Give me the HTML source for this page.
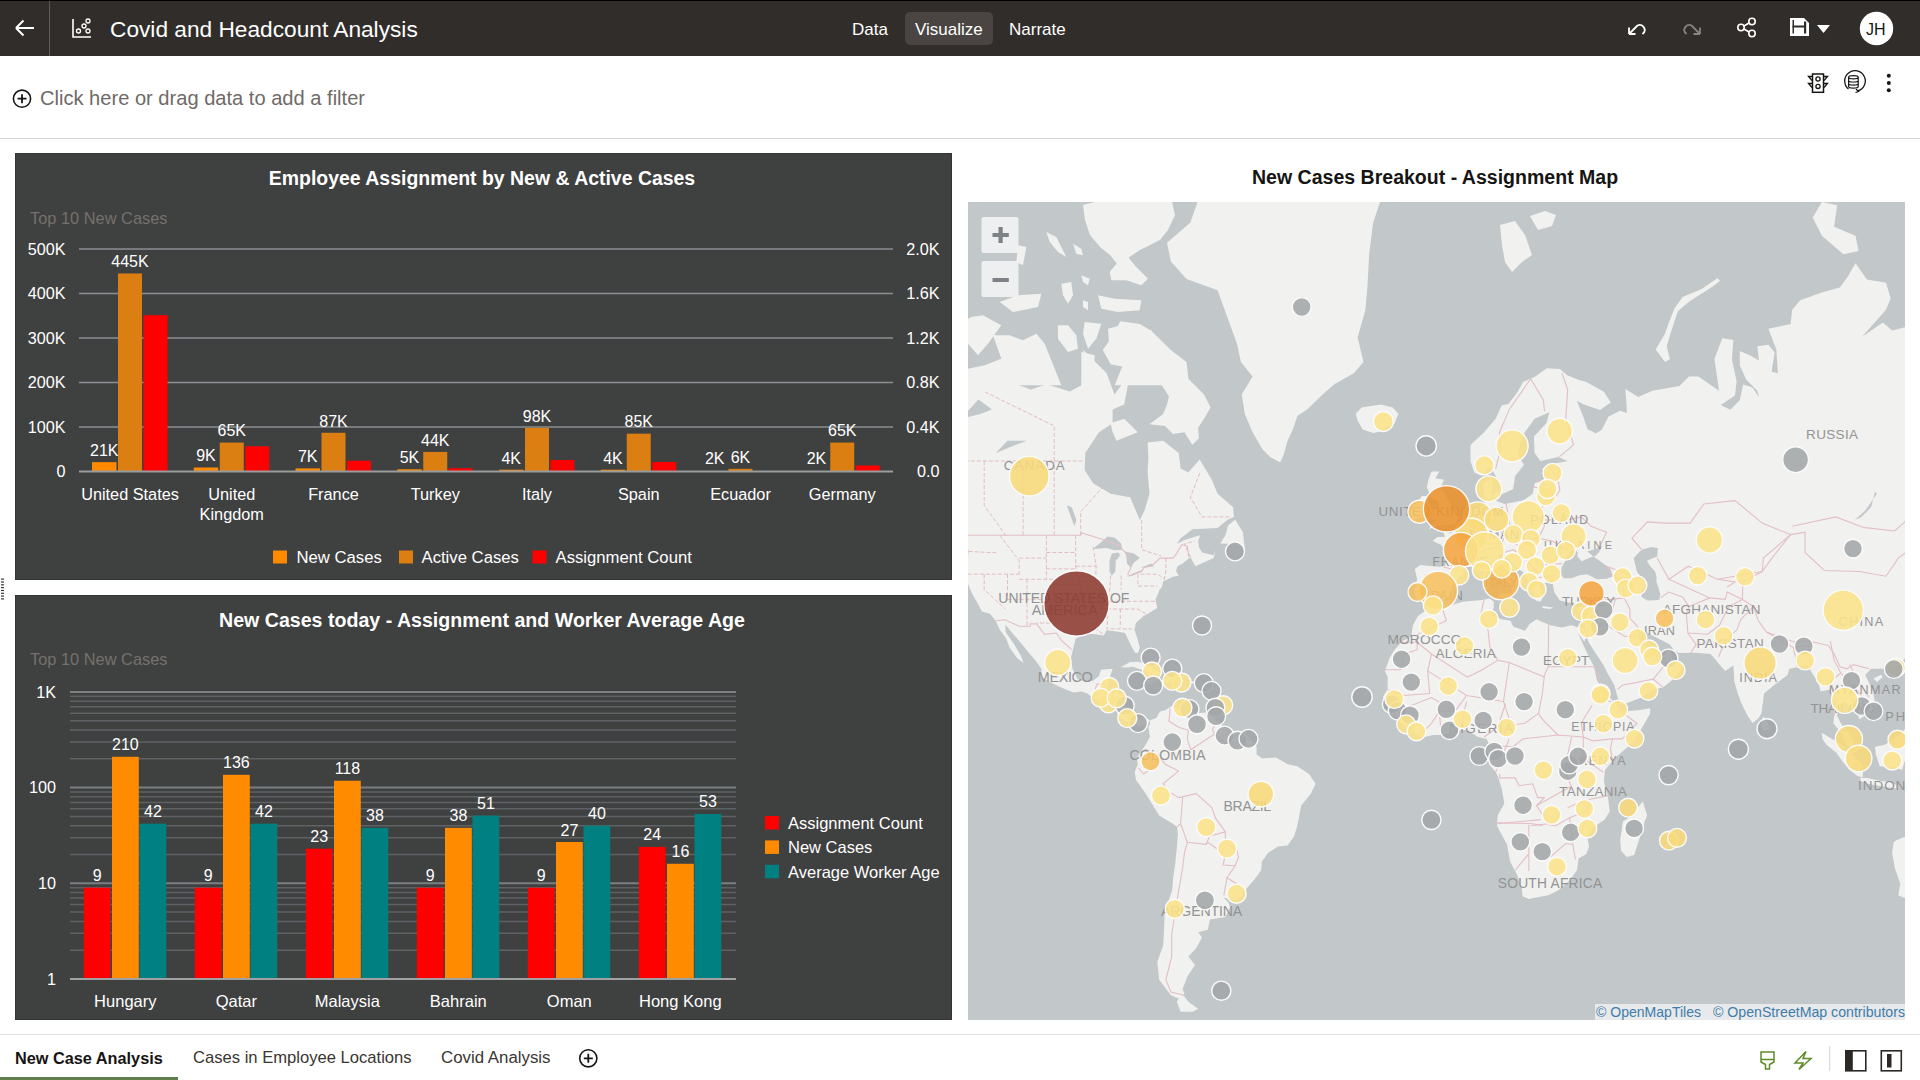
<!DOCTYPE html>
<html><head><meta charset="utf-8">
<style>
*{box-sizing:border-box;margin:0;padding:0}
html,body{width:1920px;height:1080px;overflow:hidden;background:#fff;font-family:"Liberation Sans",sans-serif}
.abs{position:absolute}
#hdr{position:absolute;left:0;top:0;width:1920px;height:56px;background:#312d2a;border-top:1px solid #000}
.ht{position:absolute;color:#fff;white-space:nowrap;line-height:1}
#filter{position:absolute;left:0;top:56px;width:1920px;height:83px;background:#fff;border-bottom:1px solid #d6d3d0}
.panel{position:absolute;background:#3f4040;box-shadow:inset 0 0 0 1px #333535}
.t{position:absolute;white-space:nowrap;line-height:1}
#tabs{position:absolute;left:0;top:1034px;width:1920px;height:46px;border-top:1px solid #e1dfdc;background:#fff}
</style></head>
<body>
<!-- HEADER -->
<div id="hdr">
  <svg class="abs" style="left:0;top:-1px" width="1920" height="56">
    <!-- back arrow -->
    <path d="M16 28 H34 M16 28 L23.5 20.5 M16 28 L23.5 35.5" stroke="#fff" stroke-width="2" fill="none"/>
    <line x1="49.5" y1="1" x2="49.5" y2="56" stroke="#5f5b58" stroke-width="1"/>
    <!-- scatter icon -->
    <path d="M73 19 V37 H91" stroke="#fff" stroke-width="1.6" fill="none"/>
    <circle cx="78.5" cy="31" r="2" stroke="#fff" stroke-width="1.3" fill="none"/>
    <circle cx="84" cy="26" r="2" stroke="#fff" stroke-width="1.3" fill="none"/>
    <circle cx="88" cy="21" r="2" stroke="#fff" stroke-width="1.3" fill="none"/>
    <circle cx="88" cy="31" r="2" stroke="#fff" stroke-width="1.3" fill="none"/>
    <!-- Visualize bg -->
    <rect x="905" y="12" width="88" height="33" rx="5" fill="#4a4542"/>
    <!-- undo -->
    <path d="M1629 34 L1637 26 M1629 34 V27.5 M1629 34 H1635.5 M1633 30 L1637.5 25.5 A5 5 0 0 1 1644 32.5 L1642.5 34" stroke="#fff" stroke-width="1.8" fill="none"/>
    <!-- redo -->
    <path d="M1700 34 L1692 26 M1700 34 V27.5 M1700 34 H1693.5 M1696 30 L1691.5 25.5 A5 5 0 0 0 1685 32.5 L1686.5 34" stroke="#8a8481" stroke-width="1.8" fill="none"/>
    <!-- share -->
    <circle cx="1741" cy="27.5" r="3.2" stroke="#fff" stroke-width="1.6" fill="none"/>
    <circle cx="1752" cy="21.5" r="3.2" stroke="#fff" stroke-width="1.6" fill="none"/>
    <circle cx="1752" cy="33.5" r="3.2" stroke="#fff" stroke-width="1.6" fill="none"/>
    <path d="M1744 26 L1749 23 M1744 29 L1749 32" stroke="#fff" stroke-width="1.6"/>
    <!-- save -->
    <path d="M1790 18 H1804 L1809 23 V36 H1790 Z" fill="#fff"/>
    <rect x="1792.5" y="20" width="1.5" height="13.5" fill="#312d2a"/>
    <rect x="1804" y="21.5" width="2.2" height="12" fill="#312d2a"/>
    <rect x="1792.5" y="25.5" width="13" height="2" fill="#312d2a"/>
    <path d="M1817 25 H1830 L1823.5 33 Z" fill="#fff"/>
    <!-- avatar -->
    <circle cx="1876.5" cy="28.5" r="16.7" fill="#fff"/>
  </svg>
  <div class="ht" style="left:110px;top:17px;font-size:22.7px">Covid and Headcount Analysis</div>
  <div class="ht" style="left:852px;top:20px;font-size:17px">Data</div>
  <div class="ht" style="left:915px;top:20px;font-size:17px">Visualize</div>
  <div class="ht" style="left:1009px;top:20px;font-size:17px">Narrate</div>
  <div class="ht" style="left:1866px;top:21px;font-size:16px;color:#161513">JH</div>
</div>

<!-- FILTER BAR -->
<div id="filter">
  <svg class="abs" style="left:0;top:0" width="1920" height="82">
    <circle cx="22" cy="42.7" r="8.6" stroke="#161513" stroke-width="1.6" fill="none"/>
    <path d="M17.5 42.7 H26.5 M22 38.2 V47.2" stroke="#161513" stroke-width="1.8"/>
    <!-- traffic light icon -->
    <rect x="1812.5" y="18" width="11" height="18.3" fill="none" stroke="#161513" stroke-width="1.5"/>
    <circle cx="1818" cy="23" r="2.1" fill="none" stroke="#161513" stroke-width="1.3"/>
    <circle cx="1818" cy="30.4" r="2.1" fill="none" stroke="#161513" stroke-width="1.3"/>
    <path d="M1812 20.5 H1808.5 L1812 24.5 M1812 27.5 H1808.5 L1812 31.5 M1824 20.5 H1827.5 L1824 24.5 M1824 27.5 H1827.5 L1824 31.5" fill="none" stroke="#161513" stroke-width="1.3"/>
    <!-- db refresh icon -->
    <path d="M1848.5 33 A10.3 10.3 0 1 1 1857.5 35" fill="none" stroke="#161513" stroke-width="1.3"/>
    <path d="M1856 33 L1858.5 35.5 L1855.5 36.5" fill="none" stroke="#161513" stroke-width="1.2"/>
    <ellipse cx="1853.4" cy="21.2" rx="4.8" ry="1.6" fill="none" stroke="#161513" stroke-width="1.2"/>
    <path d="M1848.6 21.2 V30.6 A4.8 1.6 0 0 0 1858.2 30.6 V21.2 M1848.6 24.4 A4.8 1.6 0 0 0 1858.2 24.4 M1848.6 27.6 A4.8 1.6 0 0 0 1858.2 27.6" fill="none" stroke="#161513" stroke-width="1.2"/>
    <!-- kebab -->
    <circle cx="1888.8" cy="19.7" r="2" fill="#161513"/>
    <circle cx="1888.8" cy="27" r="2" fill="#161513"/>
    <circle cx="1888.8" cy="34.3" r="2" fill="#161513"/>
  </svg>
  <div class="t" style="left:40px;top:32px;font-size:20.1px;color:#6f6a67">Click here or drag data to add a filter</div>
</div>

<!-- PANELS -->
<svg class="abs" style="left:0;top:0" width="6" height="1080">
  <g fill="#3a3836"><rect x="1" y="578.5" width="3" height="1.2"/><rect x="1" y="581.4" width="3" height="1.2"/><rect x="1" y="584.2" width="3" height="1.2"/><rect x="1" y="587" width="3" height="1.2"/><rect x="1" y="589.9" width="3" height="1.2"/><rect x="1" y="592.7" width="3" height="1.2"/><rect x="1" y="595.5" width="3" height="1.2"/><rect x="1" y="598.3" width="3" height="1.2"/></g>
</svg>
<div class="panel" id="p1" style="left:15px;top:153px;width:937px;height:427px"></div>
<svg class="abs" style="left:0;top:0;pointer-events:none" width="1920" height="1080" font-family="Liberation Sans, sans-serif">
<text x="482" y="185" text-anchor="middle" font-size="19.45" font-weight="700" fill="#fff">Employee Assignment by New &amp; Active Cases</text>
<text x="30" y="224" font-size="16.4" fill="#76716d">Top 10 New Cases</text>
<line x1="79" y1="427.0" x2="893" y2="427.0" stroke="#8b8f92" stroke-width="1.4"/>
<line x1="79" y1="382.5" x2="893" y2="382.5" stroke="#8b8f92" stroke-width="1.4"/>
<line x1="79" y1="338.0" x2="893" y2="338.0" stroke="#8b8f92" stroke-width="1.4"/>
<line x1="79" y1="293.5" x2="893" y2="293.5" stroke="#8b8f92" stroke-width="1.4"/>
<line x1="79" y1="249.0" x2="893" y2="249.0" stroke="#8b8f92" stroke-width="1.4"/>
<text x="65.5" y="477.1" text-anchor="end" font-size="16.2" fill="#fff">0</text>
<text x="939.5" y="477.1" text-anchor="end" font-size="16.2" fill="#fff">0.0</text>
<text x="65.5" y="432.6" text-anchor="end" font-size="16.2" fill="#fff">100K</text>
<text x="939.5" y="432.6" text-anchor="end" font-size="16.2" fill="#fff">0.4K</text>
<text x="65.5" y="388.1" text-anchor="end" font-size="16.2" fill="#fff">200K</text>
<text x="939.5" y="388.1" text-anchor="end" font-size="16.2" fill="#fff">0.8K</text>
<text x="65.5" y="343.6" text-anchor="end" font-size="16.2" fill="#fff">300K</text>
<text x="939.5" y="343.6" text-anchor="end" font-size="16.2" fill="#fff">1.2K</text>
<text x="65.5" y="299.1" text-anchor="end" font-size="16.2" fill="#fff">400K</text>
<text x="939.5" y="299.1" text-anchor="end" font-size="16.2" fill="#fff">1.6K</text>
<text x="65.5" y="254.6" text-anchor="end" font-size="16.2" fill="#fff">500K</text>
<text x="939.5" y="254.6" text-anchor="end" font-size="16.2" fill="#fff">2.0K</text>
<rect x="92.00" y="462.15" width="24.5" height="9.35" fill="#ff8a00"/>
<text x="104.25" y="455.95" text-anchor="middle" font-size="16" fill="#fff">21K</text>
<rect x="118.00" y="273.48" width="24" height="198.03" fill="#dc7f12"/>
<text x="130.00" y="267.28" text-anchor="middle" font-size="16" fill="#fff">445K</text>
<rect x="143.50" y="315.19" width="24" height="156.31" fill="#ff0000"/>
<text x="130.00" y="499.5" text-anchor="middle" font-size="16.3" fill="#fff">United States</text>
<rect x="193.75" y="467.50" width="24.5" height="4.00" fill="#ff8a00"/>
<text x="206.00" y="461.30" text-anchor="middle" font-size="16" fill="#fff">9K</text>
<rect x="219.75" y="442.57" width="24" height="28.93" fill="#dc7f12"/>
<text x="231.75" y="436.38" text-anchor="middle" font-size="16" fill="#fff">65K</text>
<rect x="245.25" y="446.25" width="24" height="25.25" fill="#ff0000"/>
<text x="231.75" y="499.5" text-anchor="middle" font-size="16.3" fill="#fff">United</text>
<text x="231.75" y="519.5" text-anchor="middle" font-size="16.3" fill="#fff">Kingdom</text>
<rect x="295.50" y="468.38" width="24.5" height="3.12" fill="#ff8a00"/>
<text x="307.75" y="462.19" text-anchor="middle" font-size="16" fill="#fff">7K</text>
<rect x="321.50" y="432.78" width="24" height="38.72" fill="#dc7f12"/>
<text x="333.50" y="426.58" text-anchor="middle" font-size="16" fill="#fff">87K</text>
<rect x="347.00" y="460.71" width="24" height="10.79" fill="#ff0000"/>
<text x="333.50" y="499.5" text-anchor="middle" font-size="16.3" fill="#fff">France</text>
<rect x="397.25" y="469.27" width="24.5" height="2.23" fill="#ff8a00"/>
<text x="409.50" y="463.07" text-anchor="middle" font-size="16" fill="#fff">5K</text>
<rect x="423.25" y="451.92" width="24" height="19.58" fill="#dc7f12"/>
<text x="435.25" y="445.72" text-anchor="middle" font-size="16" fill="#fff">44K</text>
<rect x="448.75" y="468.27" width="24" height="3.23" fill="#ff0000"/>
<text x="435.25" y="499.5" text-anchor="middle" font-size="16.3" fill="#fff">Turkey</text>
<rect x="499.00" y="469.72" width="24.5" height="1.78" fill="#ff8a00"/>
<text x="511.25" y="463.52" text-anchor="middle" font-size="16" fill="#fff">4K</text>
<rect x="525.00" y="427.89" width="24" height="43.61" fill="#dc7f12"/>
<text x="537.00" y="421.69" text-anchor="middle" font-size="16" fill="#fff">98K</text>
<rect x="550.50" y="460.04" width="24" height="11.46" fill="#ff0000"/>
<text x="537.00" y="499.5" text-anchor="middle" font-size="16.3" fill="#fff">Italy</text>
<rect x="600.75" y="469.72" width="24.5" height="1.78" fill="#ff8a00"/>
<text x="613.00" y="463.52" text-anchor="middle" font-size="16" fill="#fff">4K</text>
<rect x="626.75" y="433.68" width="24" height="37.83" fill="#dc7f12"/>
<text x="638.75" y="427.48" text-anchor="middle" font-size="16" fill="#fff">85K</text>
<rect x="652.25" y="462.04" width="24" height="9.46" fill="#ff0000"/>
<text x="638.75" y="499.5" text-anchor="middle" font-size="16.3" fill="#fff">Spain</text>
<text x="714.75" y="463.80" text-anchor="middle" font-size="16" fill="#fff">2K</text>
<rect x="728.50" y="468.83" width="24" height="2.67" fill="#dc7f12"/>
<text x="740.50" y="462.63" text-anchor="middle" font-size="16" fill="#fff">6K</text>
<text x="740.50" y="499.5" text-anchor="middle" font-size="16.3" fill="#fff">Ecuador</text>
<text x="816.50" y="463.80" text-anchor="middle" font-size="16" fill="#fff">2K</text>
<rect x="830.25" y="442.57" width="24" height="28.93" fill="#dc7f12"/>
<text x="842.25" y="436.38" text-anchor="middle" font-size="16" fill="#fff">65K</text>
<rect x="855.75" y="465.49" width="24" height="6.01" fill="#ff0000"/>
<text x="842.25" y="499.5" text-anchor="middle" font-size="16.3" fill="#fff">Germany</text>
<line x1="79" y1="471.5" x2="893" y2="471.5" stroke="#9a9b9c" stroke-width="2"/>
<rect x="273" y="550.5" width="14" height="13" fill="#ff8a00"/>
<text x="296.5" y="563" font-size="16.7" fill="#fff">New Cases</text>
<rect x="399" y="550.5" width="14" height="13" fill="#dc7f12"/>
<text x="421.5" y="563" font-size="16.7" fill="#fff">Active Cases</text>
<rect x="532.5" y="550.5" width="14" height="13" fill="#ff0000"/>
<text x="555.5" y="563" font-size="16.7" fill="#fff">Assignment Count</text>
</svg>
<div class="panel" id="p2" style="left:15px;top:595px;width:937px;height:425px"></div>
<svg class="abs" style="left:0;top:0;pointer-events:none" width="1920" height="1080" font-family="Liberation Sans, sans-serif">
<text x="482" y="626.8" text-anchor="middle" font-size="19.6" font-weight="700" fill="#fff">New Cases today - Assignment and Worker Average Age</text>
<text x="30" y="665" font-size="16.4" fill="#76716d">Top 10 New Cases</text>
<line x1="70" y1="950.19" x2="736" y2="950.19" stroke="#5e6265" stroke-width="1.5"/>
<line x1="70" y1="933.34" x2="736" y2="933.34" stroke="#5e6265" stroke-width="1.5"/>
<line x1="70" y1="921.38" x2="736" y2="921.38" stroke="#5e6265" stroke-width="1.5"/>
<line x1="70" y1="912.11" x2="736" y2="912.11" stroke="#5e6265" stroke-width="1.5"/>
<line x1="70" y1="904.53" x2="736" y2="904.53" stroke="#5e6265" stroke-width="1.5"/>
<line x1="70" y1="898.12" x2="736" y2="898.12" stroke="#5e6265" stroke-width="1.5"/>
<line x1="70" y1="892.57" x2="736" y2="892.57" stroke="#5e6265" stroke-width="1.5"/>
<line x1="70" y1="887.68" x2="736" y2="887.68" stroke="#5e6265" stroke-width="1.5"/>
<line x1="70" y1="883.30" x2="736" y2="883.30" stroke="#7b7f82" stroke-width="2"/>
<line x1="70" y1="854.49" x2="736" y2="854.49" stroke="#5e6265" stroke-width="1.5"/>
<line x1="70" y1="837.64" x2="736" y2="837.64" stroke="#5e6265" stroke-width="1.5"/>
<line x1="70" y1="825.68" x2="736" y2="825.68" stroke="#5e6265" stroke-width="1.5"/>
<line x1="70" y1="816.41" x2="736" y2="816.41" stroke="#5e6265" stroke-width="1.5"/>
<line x1="70" y1="808.83" x2="736" y2="808.83" stroke="#5e6265" stroke-width="1.5"/>
<line x1="70" y1="802.42" x2="736" y2="802.42" stroke="#5e6265" stroke-width="1.5"/>
<line x1="70" y1="796.87" x2="736" y2="796.87" stroke="#5e6265" stroke-width="1.5"/>
<line x1="70" y1="791.98" x2="736" y2="791.98" stroke="#5e6265" stroke-width="1.5"/>
<line x1="70" y1="787.60" x2="736" y2="787.60" stroke="#7b7f82" stroke-width="2"/>
<line x1="70" y1="758.79" x2="736" y2="758.79" stroke="#5e6265" stroke-width="1.5"/>
<line x1="70" y1="741.94" x2="736" y2="741.94" stroke="#5e6265" stroke-width="1.5"/>
<line x1="70" y1="729.98" x2="736" y2="729.98" stroke="#5e6265" stroke-width="1.5"/>
<line x1="70" y1="720.71" x2="736" y2="720.71" stroke="#5e6265" stroke-width="1.5"/>
<line x1="70" y1="713.13" x2="736" y2="713.13" stroke="#5e6265" stroke-width="1.5"/>
<line x1="70" y1="706.72" x2="736" y2="706.72" stroke="#5e6265" stroke-width="1.5"/>
<line x1="70" y1="701.17" x2="736" y2="701.17" stroke="#5e6265" stroke-width="1.5"/>
<line x1="70" y1="696.28" x2="736" y2="696.28" stroke="#5e6265" stroke-width="1.5"/>
<line x1="70" y1="691.90" x2="736" y2="691.90" stroke="#7b7f82" stroke-width="2"/>
<text x="56" y="984.60" text-anchor="end" font-size="16.2" fill="#fff">1</text>
<text x="56" y="888.90" text-anchor="end" font-size="16.2" fill="#fff">10</text>
<text x="56" y="793.20" text-anchor="end" font-size="16.2" fill="#fff">100</text>
<text x="56" y="697.50" text-anchor="end" font-size="16.2" fill="#fff">1K</text>
<rect x="83.80" y="887.68" width="26.8" height="91.32" fill="#ff0000"/>
<text x="97.20" y="881.18" text-anchor="middle" font-size="16" fill="#fff">9</text>
<rect x="112.00" y="756.76" width="26.8" height="222.24" fill="#ff8c00"/>
<text x="125.40" y="750.26" text-anchor="middle" font-size="16" fill="#fff">210</text>
<rect x="139.50" y="823.66" width="26.8" height="155.34" fill="#008080"/>
<text x="152.90" y="817.16" text-anchor="middle" font-size="16" fill="#fff">42</text>
<text x="125.30" y="1006.5" text-anchor="middle" font-size="16.5" fill="#fff">Hungary</text>
<rect x="194.80" y="887.68" width="26.8" height="91.32" fill="#ff0000"/>
<text x="208.20" y="881.18" text-anchor="middle" font-size="16" fill="#fff">9</text>
<rect x="223.00" y="774.82" width="26.8" height="204.18" fill="#ff8c00"/>
<text x="236.40" y="768.32" text-anchor="middle" font-size="16" fill="#fff">136</text>
<rect x="250.50" y="823.66" width="26.8" height="155.34" fill="#008080"/>
<text x="263.90" y="817.16" text-anchor="middle" font-size="16" fill="#fff">42</text>
<text x="236.30" y="1006.5" text-anchor="middle" font-size="16.5" fill="#fff">Qatar</text>
<rect x="305.80" y="848.68" width="26.8" height="130.32" fill="#ff0000"/>
<text x="319.20" y="842.18" text-anchor="middle" font-size="16" fill="#fff">23</text>
<rect x="334.00" y="780.72" width="26.8" height="198.28" fill="#ff8c00"/>
<text x="347.40" y="774.22" text-anchor="middle" font-size="16" fill="#fff">118</text>
<rect x="361.50" y="827.81" width="26.8" height="151.19" fill="#008080"/>
<text x="374.90" y="821.31" text-anchor="middle" font-size="16" fill="#fff">38</text>
<text x="347.30" y="1006.5" text-anchor="middle" font-size="16.5" fill="#fff">Malaysia</text>
<rect x="416.80" y="887.68" width="26.8" height="91.32" fill="#ff0000"/>
<text x="430.20" y="881.18" text-anchor="middle" font-size="16" fill="#fff">9</text>
<rect x="445.00" y="827.81" width="26.8" height="151.19" fill="#ff8c00"/>
<text x="458.40" y="821.31" text-anchor="middle" font-size="16" fill="#fff">38</text>
<rect x="472.50" y="815.59" width="26.8" height="163.41" fill="#008080"/>
<text x="485.90" y="809.09" text-anchor="middle" font-size="16" fill="#fff">51</text>
<text x="458.30" y="1006.5" text-anchor="middle" font-size="16.5" fill="#fff">Bahrain</text>
<rect x="527.80" y="887.68" width="26.8" height="91.32" fill="#ff0000"/>
<text x="541.20" y="881.18" text-anchor="middle" font-size="16" fill="#fff">9</text>
<rect x="556.00" y="842.02" width="26.8" height="136.98" fill="#ff8c00"/>
<text x="569.40" y="835.52" text-anchor="middle" font-size="16" fill="#fff">27</text>
<rect x="583.50" y="825.68" width="26.8" height="153.32" fill="#008080"/>
<text x="596.90" y="819.18" text-anchor="middle" font-size="16" fill="#fff">40</text>
<text x="569.30" y="1006.5" text-anchor="middle" font-size="16.5" fill="#fff">Oman</text>
<rect x="638.80" y="846.91" width="26.8" height="132.09" fill="#ff0000"/>
<text x="652.20" y="840.41" text-anchor="middle" font-size="16" fill="#fff">24</text>
<rect x="667.00" y="863.77" width="26.8" height="115.23" fill="#ff8c00"/>
<text x="680.40" y="857.27" text-anchor="middle" font-size="16" fill="#fff">16</text>
<rect x="694.50" y="813.99" width="26.8" height="165.01" fill="#008080"/>
<text x="707.90" y="807.49" text-anchor="middle" font-size="16" fill="#fff">53</text>
<text x="680.30" y="1006.5" text-anchor="middle" font-size="16.5" fill="#fff">Hong Kong</text>
<line x1="70" y1="979.0" x2="736" y2="979.0" stroke="#a0a1a2" stroke-width="2.2"/>
<rect x="765" y="816" width="14" height="13.5" fill="#ff0000"/>
<text x="788" y="829" font-size="16.5" fill="#fff">Assignment Count</text>
<rect x="765" y="840.4" width="14" height="13.5" fill="#ff8c00"/>
<text x="788" y="853.4" font-size="16.5" fill="#fff">New Cases</text>
<rect x="765" y="864.8" width="14" height="13.5" fill="#008080"/>
<text x="788" y="877.8" font-size="16.5" fill="#fff">Average Worker Age</text>
</svg>
<svg class="abs" style="left:0;top:0" width="1920" height="1080" font-family="Liberation Sans, sans-serif">
<defs><clipPath id="mclip"><rect x="968" y="202" width="937" height="818"/></clipPath></defs>
<g clip-path="url(#mclip)">
<rect x="968" y="202" width="937" height="818" fill="#c2c7ca"/>
<path d="M828.6 367.7 L902.5 373.3 L925.9 371.1 L949.2 367.7 L968.6 373.3 L984.2 367.7 L1007.5 381.0 L1030.9 389.4 L1046.4 384.2 L1069.8 391.5 L1081.5 385.2 L1083.4 350.0 L1106.7 373.3 L1114.5 394.6 L1130.1 373.3 L1124.2 404.5 L1112.6 409.4 L1112.6 423.3 L1099.0 432.2 L1085.3 453.1 L1084.6 470.1 L1093.1 483.3 L1110.6 493.8 L1130.1 497.2 L1139.8 520.0 L1144.5 510.5 L1149.5 493.8 L1147.6 472.4 L1148.4 457.1 L1147.6 442.4 L1163.1 440.7 L1178.7 453.1 L1180.6 468.6 L1188.4 472.4 L1199.7 459.4 L1211.8 479.7 L1217.6 493.8 L1233.2 507.2 L1233.9 516.9 L1227.3 520.0 L1217.6 528.0 L1192.3 529.2 L1186.5 534.0 L1180.6 538.2 L1176.8 544.0 L1184.5 539.9 L1200.1 535.2 L1198.2 541.1 L1198.9 546.9 L1202.0 552.5 L1213.7 555.3 L1215.7 549.7 L1213.7 558.1 L1195.4 566.2 L1192.3 560.8 L1190.4 557.0 L1182.6 563.5 L1177.5 566.2 L1176.0 571.0 L1178.7 575.7 L1172.9 576.8 L1163.1 581.4 L1162.0 587.0 L1159.2 590.0 L1158.9 592.0 L1155.4 599.4 L1157.3 608.0 L1151.5 611.4 L1143.7 616.1 L1135.9 623.0 L1134.4 629.8 L1137.5 638.8 L1139.8 647.5 L1138.2 653.1 L1135.1 652.7 L1132.0 647.5 L1128.9 641.0 L1125.0 633.0 L1119.6 632.1 L1106.7 630.3 L1103.6 635.6 L1095.1 634.3 L1086.1 633.4 L1075.6 638.8 L1072.9 649.7 L1070.9 658.3 L1072.5 668.8 L1077.6 679.2 L1083.4 681.3 L1093.1 680.8 L1099.0 675.9 L1100.9 669.7 L1112.6 668.8 L1110.6 675.1 L1108.7 681.3 L1106.7 691.4 L1116.5 692.2 L1127.0 695.5 L1125.8 705.5 L1125.4 711.4 L1130.9 717.4 L1139.8 718.2 L1145.6 717.4 L1149.9 720.5 L1146.8 725.2 L1137.9 726.0 L1132.0 722.5 L1126.2 721.3 L1117.6 715.8 L1117.2 711.4 L1110.6 705.5 L1106.7 702.3 L1095.1 699.5 L1087.3 693.5 L1081.5 691.4 L1073.7 692.6 L1065.9 689.4 L1056.2 685.3 L1048.4 681.3 L1041.4 677.1 L1041.4 668.8 L1035.5 660.4 L1028.2 651.9 L1021.2 643.2 L1013.4 634.3 L1005.2 624.4 L1005.6 632.1 L1013.4 643.2 L1021.2 656.2 L1023.5 662.9 L1017.3 658.3 L1009.5 647.5 L1006.4 638.8 L999.8 629.8 L995.5 620.7 L990.0 613.7 L981.9 611.4 L976.8 601.8 L972.5 594.5 L967.1 581.9 L966.7 568.9 L968.6 551.4 L965.9 538.8 L955.0 529.2 L951.1 516.9 L943.4 500.6 L922.0 476.1 L906.4 464.8 L828.6 461.0Z" fill="#f1f1ef" />
<path d="M1139.8 324.1 L1151.5 330.9 L1170.9 350.0 L1186.5 362.0 L1188.4 378.8 L1204.0 394.6 L1210.6 407.4 L1204.0 418.7 L1198.2 427.8 L1198.9 438.2 L1192.3 444.9 L1184.5 432.2 L1172.9 433.9 L1165.1 426.0 L1149.5 424.2 L1163.1 414.1 L1167.0 404.5 L1169.0 396.6 L1161.2 384.2 L1151.5 371.1 L1143.7 375.5 L1128.1 367.7 L1110.6 364.3 L1102.8 350.0 L1112.6 336.1 L1120.3 321.3Z" fill="#f1f1ef" />
<path d="M1116.5 440.7 L1137.9 432.2 L1124.2 418.7 L1110.6 423.3 L1112.6 432.2Z" fill="#f1f1ef" />
<path d="M1280.2 462.5 L1270.1 457.1 L1262.3 449.0 L1252.6 432.2 L1244.8 414.1 L1241.7 394.6 L1252.6 376.6 L1240.9 362.0 L1237.0 343.8 L1227.3 317.2 L1217.6 290.2 L1186.5 278.9 L1170.9 261.6 L1167.0 242.8 L1190.4 222.4 L1198.2 200.0 L1217.6 161.6 L1295.4 131.7 L1365.4 161.6 L1384.9 187.9 L1373.2 222.4 L1369.3 252.4 L1367.4 287.0 L1365.4 310.0 L1357.6 337.4 L1363.5 362.0 L1353.8 373.3 L1334.3 384.2 L1322.6 394.6 L1307.1 409.4 L1297.3 416.0 L1293.5 427.8 L1287.6 440.7 L1283.7 454.7Z" fill="#f1f1ef" />
<path d="M1373.2 433.0 L1362.7 429.5 L1357.6 420.6 L1355.7 414.1 L1361.5 407.4 L1381.0 404.5 L1392.7 407.4 L1398.5 414.1 L1394.6 423.3 L1381.0 431.3Z" fill="#f1f1ef" />
<path d="M1235.1 519.4 L1242.9 532.2 L1244.8 548.6 L1235.1 544.0 L1220.3 543.4 L1225.4 535.2 L1228.1 525.6Z" fill="#f1f1ef" />
<path d="M1120.7 667.2 L1130.1 662.1 L1137.9 661.7 L1147.6 664.6 L1155.4 670.1 L1162.4 673.8 L1157.3 675.5 L1148.7 675.5 L1145.6 670.9 L1137.9 668.4 L1132.8 666.7 L1126.2 667.6Z" fill="#f1f1ef" />
<path d="M1167.8 675.5 L1178.7 676.3 L1184.9 681.3 L1174.8 682.5 L1161.6 683.3 L1162.0 680.8Z" fill="#f1f1ef" />
<path d="M1146.4 681.3 L1154.2 682.5 L1151.5 684.5 L1146.4 683.3Z" fill="#f1f1ef" />
<path d="M1189.6 681.3 L1195.8 681.7 L1195.0 683.5 L1189.6 683.3Z" fill="#f1f1ef" />
<path d="M970.6 539.4 L964.8 529.2 L951.5 524.4 L953.1 526.8 L960.9 535.2Z" fill="#f1f1ef" />
<path d="M1149.9 720.5 L1156.5 717.8 L1160.0 711.4 L1165.1 710.3 L1172.1 705.9 L1177.9 708.3 L1185.7 712.2 L1194.3 713.4 L1205.9 712.6 L1210.6 715.4 L1217.6 721.3 L1223.4 727.2 L1237.0 731.9 L1244.8 733.1 L1250.7 738.9 L1256.5 746.7 L1256.5 754.5 L1262.3 758.4 L1276.0 757.6 L1287.6 764.2 L1297.3 766.2 L1309.0 774.0 L1315.6 783.8 L1311.0 793.6 L1301.2 805.5 L1299.3 815.5 L1297.3 825.7 L1294.2 836.0 L1287.6 845.6 L1277.9 846.5 L1268.2 852.8 L1261.9 861.5 L1261.2 870.2 L1254.6 879.2 L1246.8 888.3 L1240.9 897.6 L1233.2 900.0 L1223.4 897.6 L1228.5 902.4 L1230.0 907.2 L1225.4 917.0 L1209.8 919.5 L1207.9 929.7 L1198.2 932.2 L1202.0 937.5 L1196.2 948.2 L1188.4 956.5 L1195.0 965.0 L1187.3 976.8 L1182.6 989.0 L1184.5 994.0 L1178.7 998.5 L1170.9 995.3 L1159.2 979.8 L1157.3 962.1 L1163.1 945.5 L1163.9 932.2 L1164.7 912.1 L1172.1 890.6 L1173.3 876.9 L1175.2 863.6 L1176.8 848.6 L1177.9 833.9 L1177.1 826.9 L1172.9 823.7 L1159.2 815.5 L1154.2 807.5 L1145.6 793.6 L1135.9 779.8 L1134.7 772.0 L1137.9 764.2 L1136.7 758.4 L1141.7 750.6 L1145.6 744.8 L1149.9 737.0 L1148.4 727.2 L1150.3 723.3Z" fill="#f1f1ef" />
<path d="M1180.6 995.3 L1176.8 1001.8 L1180.6 1011.8 L1192.3 1011.8 L1198.2 1009.1 L1188.4 1001.8 L1184.1 995.9Z" fill="#f1f1ef" />
<path d="M1428.4 605.2 L1443.2 608.0 L1451.0 605.2 L1462.7 601.8 L1482.1 599.9 L1489.9 598.4 L1493.8 601.8 L1493.8 608.0 L1490.7 612.3 L1493.8 616.1 L1501.6 619.3 L1510.5 620.7 L1513.2 626.6 L1524.9 630.7 L1529.6 623.9 L1536.6 619.3 L1542.4 622.1 L1550.2 625.3 L1561.9 627.6 L1571.6 625.3 L1576.6 627.1 L1583.3 627.6 L1586.8 634.3 L1584.4 641.8 L1577.8 632.5 L1582.5 643.2 L1589.5 658.3 L1594.2 666.7 L1596.5 679.2 L1604.3 693.1 L1616.3 703.5 L1619.0 709.5 L1624.1 711.4 L1637.7 710.3 L1650.2 708.3 L1650.2 713.4 L1644.7 723.3 L1637.7 735.0 L1628.0 746.7 L1614.4 758.4 L1605.0 770.1 L1603.9 781.8 L1607.8 795.6 L1609.7 811.5 L1604.7 819.6 L1593.0 827.7 L1587.2 836.0 L1589.1 846.5 L1586.4 854.1 L1578.6 858.4 L1577.0 870.2 L1568.5 881.4 L1558.0 890.6 L1548.2 895.3 L1528.8 899.1 L1522.6 896.2 L1521.8 888.3 L1517.1 874.7 L1510.1 861.5 L1507.0 844.4 L1496.9 825.7 L1497.7 815.5 L1504.3 803.5 L1502.0 789.7 L1498.5 777.9 L1495.7 772.0 L1489.1 764.2 L1487.2 754.5 L1489.1 744.8 L1486.8 738.9 L1478.2 737.0 L1466.6 729.9 L1456.8 730.3 L1443.2 735.0 L1433.5 735.0 L1421.8 737.4 L1408.2 729.2 L1399.7 721.3 L1393.4 713.4 L1385.6 705.5 L1382.9 696.7 L1387.6 689.4 L1387.6 677.1 L1384.9 670.9 L1389.5 658.3 L1394.6 649.7 L1402.4 641.0 L1411.3 636.5 L1412.9 625.3 L1417.9 616.1 L1424.5 611.4Z" fill="#f1f1ef" />
<path d="M1642.8 801.5 L1647.1 815.5 L1644.7 821.6 L1639.7 838.1 L1634.2 855.0 L1626.8 857.1 L1621.0 850.7 L1620.2 840.2 L1622.9 821.6 L1631.9 815.5 L1637.7 807.5Z" fill="#f1f1ef" />
<path d="M1429.2 604.2 L1424.2 599.4 L1416.4 599.9 L1414.0 591.0 L1417.2 579.3 L1414.8 568.9 L1420.3 565.1 L1437.4 566.7 L1445.2 566.2 L1446.3 560.8 L1444.0 549.7 L1441.3 545.1 L1432.7 541.1 L1437.4 537.0 L1444.8 537.0 L1443.6 531.0 L1450.2 533.4 L1456.8 529.2 L1460.7 522.5 L1467.3 516.9 L1472.4 508.5 L1480.2 507.2 L1484.8 504.6 L1484.5 498.6 L1483.3 483.3 L1491.8 478.3 L1493.0 486.9 L1491.1 493.8 L1493.8 499.9 L1504.7 503.9 L1523.0 500.6 L1532.7 493.8 L1534.6 483.3 L1545.5 479.7 L1542.4 468.6 L1548.2 464.8 L1567.7 461.0 L1558.0 457.1 L1540.5 461.0 L1534.6 453.1 L1533.9 436.5 L1546.3 423.3 L1549.4 412.2 L1534.6 418.7 L1524.9 432.2 L1518.3 449.0 L1519.1 457.1 L1524.1 464.8 L1515.2 476.1 L1513.2 489.0 L1501.6 494.5 L1500.4 486.9 L1495.7 476.1 L1489.9 466.4 L1482.1 476.1 L1474.3 472.4 L1470.5 461.0 L1470.5 444.9 L1484.1 432.2 L1495.7 418.7 L1501.6 405.5 L1508.3 404.0 L1516.7 393.3 L1523.3 381.7 L1535.0 376.7 L1546.7 368.3 L1560.0 369.0 L1566.7 375.0 L1579.0 380.0 L1585.8 381.7 L1604.0 391.7 L1610.8 402.5 L1600.0 410.0 L1583.3 404.2 L1576.7 400.8 L1583.3 416.7 L1587.5 429.2 L1595.8 433.3 L1601.7 430.0 L1608.3 416.7 L1620.0 410.8 L1627.0 413.0 L1625.4 389.0 L1638.1 397.0 L1652.4 390.7 L1679.4 386.0 L1689.0 376.4 L1698.5 376.4 L1719.1 390.7 L1714.4 359.0 L1722.3 338.3 L1733.4 339.9 L1731.9 359.0 L1736.6 381.2 L1735.0 395.5 L1720.7 405.0 L1730.3 409.8 L1739.8 400.3 L1743.0 384.4 L1752.5 387.6 L1758.9 397.0 L1757.3 390.7 L1746.1 379.6 L1739.8 365.3 L1739.8 351.0 L1750.9 355.8 L1758.9 360.5 L1757.3 346.3 L1768.4 344.7 L1774.7 352.6 L1771.6 371.7 L1777.9 373.3 L1776.3 349.4 L1768.4 328.8 L1790.6 324.0 L1792.2 309.7 L1800.2 300.2 L1822.4 292.2 L1839.9 287.5 L1847.8 276.4 L1855.5 263.3 L1866.9 279.5 L1886.0 282.7 L1890.7 298.6 L1886.0 309.7 L1862.1 336.7 L1882.8 322.4 L1892.3 330.4 L1905.0 327.2 L1960.0 320.0 L1956.7 330.9 L1956.7 584.5 L1925.6 632.1 L1898.3 666.7 L1882.8 668.8 L1871.1 668.8 L1865.3 675.1 L1873.1 691.4 L1875.8 707.5 L1869.2 713.4 L1859.5 719.3 L1857.5 714.2 L1849.7 705.5 L1841.9 701.5 L1840.0 705.5 L1836.9 715.4 L1841.9 725.2 L1848.6 731.1 L1853.2 740.9 L1856.3 749.1 L1853.6 749.4 L1845.8 744.8 L1841.2 733.1 L1833.4 723.3 L1834.2 715.4 L1834.6 705.5 L1830.3 689.4 L1820.5 691.4 L1818.6 683.3 L1810.8 670.9 L1806.9 664.6 L1801.1 666.7 L1789.4 668.8 L1787.5 675.1 L1773.9 685.3 L1764.1 693.5 L1763.0 701.5 L1761.4 713.4 L1758.3 718.6 L1752.5 722.9 L1747.4 715.4 L1741.6 703.5 L1737.7 693.5 L1734.2 681.3 L1733.8 670.9 L1733.4 665.5 L1725.2 670.9 L1719.4 664.6 L1716.3 660.4 L1710.5 654.0 L1696.1 652.7 L1678.6 653.1 L1673.5 649.7 L1670.0 644.5 L1645.5 632.1 L1639.7 632.1 L1637.7 636.5 L1644.7 645.4 L1651.3 649.7 L1651.3 656.2 L1661.8 657.4 L1666.9 651.9 L1670.0 648.0 L1672.0 658.3 L1683.6 664.6 L1678.6 673.0 L1670.8 681.3 L1663.0 687.4 L1653.3 689.4 L1641.6 697.5 L1626.0 703.5 L1620.2 704.7 L1617.1 695.5 L1614.4 685.3 L1608.5 675.1 L1603.1 664.6 L1596.1 654.0 L1587.9 641.0 L1587.2 634.3 L1584.0 626.2 L1587.5 618.4 L1590.7 609.0 L1591.0 600.4 L1581.3 603.3 L1569.6 602.8 L1559.9 600.4 L1554.1 592.0 L1552.9 584.5 L1552.1 579.9 L1544.4 583.4 L1539.7 581.9 L1539.7 587.0 L1544.0 594.5 L1540.5 601.8 L1535.8 600.4 L1533.5 593.0 L1529.2 587.0 L1526.9 579.3 L1523.0 572.1 L1514.4 566.2 L1506.6 556.4 L1504.3 554.2 L1498.8 555.3 L1499.6 563.5 L1506.2 571.5 L1513.2 576.8 L1523.0 581.9 L1517.5 582.9 L1517.5 589.5 L1513.6 594.5 L1511.7 593.5 L1511.7 584.5 L1503.5 578.3 L1494.6 571.5 L1490.7 563.5 L1485.2 561.3 L1480.2 565.1 L1476.3 568.3 L1470.5 566.7 L1464.6 567.3 L1463.4 572.6 L1458.0 578.3 L1453.3 581.9 L1451.8 590.5 L1448.3 596.4 L1443.2 600.4 L1433.9 600.8Z" fill="#f1f1ef" />
<path d="M1428.8 529.2 L1437.4 525.6 L1445.2 525.0 L1454.9 524.4 L1456.4 520.6 L1457.6 516.9 L1457.6 511.1 L1451.8 507.2 L1448.7 500.6 L1443.2 491.8 L1439.3 490.4 L1444.0 479.7 L1435.4 478.3 L1439.3 471.6 L1431.5 471.6 L1428.4 479.7 L1426.9 486.9 L1429.6 493.8 L1431.5 498.6 L1437.4 500.6 L1439.3 508.5 L1433.1 509.2 L1431.2 516.9 L1431.5 519.4 L1438.2 520.0 L1433.5 521.9Z" fill="#f1f1ef" />
<path d="M1412.9 520.0 L1410.5 515.6 L1411.7 507.2 L1417.9 502.0 L1421.8 495.9 L1426.9 495.9 L1427.7 503.9 L1426.5 515.6 L1419.1 518.1Z" fill="#f1f1ef" />
<path d="M1500.0 225.0 L1515.0 221.0 L1525.0 235.0 L1532.0 255.0 L1522.0 262.0 L1512.0 272.0 L1505.0 262.0 L1502.0 245.0Z" fill="#f1f1ef" />
<path d="M1530.0 216.0 L1545.0 211.0 L1556.0 215.0 L1552.0 226.0 L1538.0 230.0Z" fill="#f1f1ef" />
<path d="M1812.7 217.5 L1821.9 202.0 L1837.2 205.3 L1834.1 226.7 L1855.5 235.8 L1858.6 251.1 L1843.3 254.2 L1821.9 235.8Z" fill="#f1f1ef" />
<path d="M1717.6 278.0 L1701.7 289.0 L1682.6 297.0 L1674.7 308.0 L1668.3 324.0 L1665.1 333.5 L1655.6 349.4 L1665.1 362.0 L1669.9 359.0 L1666.7 346.3 L1671.5 330.4 L1677.8 311.3 L1689.0 301.8 L1711.2 287.5 L1720.0 281.0Z" fill="#f1f1ef" />
<path d="M1763.0 716.2 L1768.0 723.3 L1769.2 729.2 L1764.1 731.1 L1761.4 727.2Z" fill="#f1f1ef" />
<path d="M1821.7 732.7 L1832.2 738.9 L1841.9 744.8 L1849.7 750.6 L1856.7 758.4 L1863.3 766.2 L1862.6 777.5 L1857.5 775.9 L1849.7 770.1 L1843.1 762.3 L1836.1 752.6 L1826.4 744.8 L1822.5 738.9Z" fill="#f1f1ef" />
<path d="M1860.2 777.9 L1867.2 777.9 L1880.8 781.0 L1888.6 781.8 L1896.4 784.9 L1896.4 788.5 L1882.8 786.5 L1867.2 783.8 L1860.6 781.0Z" fill="#f1f1ef" />
<path d="M1906.1 727.2 L1900.3 735.0 L1884.7 744.8 L1875.0 746.7 L1875.8 754.5 L1879.7 766.2 L1896.4 768.1 L1902.2 770.1 L1904.2 762.3 L1913.9 750.6 L1910.0 738.9 L1912.0 729.2Z" fill="#f1f1ef" />
<path d="M1893.7 842.3 L1892.1 852.8 L1893.7 861.5 L1894.8 868.0 L1900.3 883.7 L1898.3 895.3 L1909.2 900.0 L1937.2 895.3 L1937.2 809.5 L1912.0 833.9 L1896.4 840.2Z" fill="#f1f1ef" />
<path d="M1880.8 674.7 L1882.8 677.1 L1877.0 682.1 L1873.5 678.4Z" fill="#f1f1ef" />
<path d="M1499.2 593.0 L1511.7 593.5 L1510.5 599.4 L1509.3 600.8 L1499.6 596.9Z" fill="#f1f1ef" />
<path d="M1486.8 578.3 L1489.1 579.9 L1488.3 589.0 L1484.1 590.0 L1482.9 581.4Z" fill="#f1f1ef" />
<path d="M1487.6 568.9 L1486.8 577.3 L1484.5 574.7 L1484.5 569.9Z" fill="#f1f1ef" />
<path d="M1542.4 606.1 L1553.3 607.6 L1550.2 609.0 L1542.4 608.0Z" fill="#f1f1ef" />
<path d="M1585.6 606.1 L1579.4 610.9 L1576.6 609.5 L1579.4 607.6Z" fill="#f1f1ef" />
<path d="M1499.6 490.4 L1498.5 497.2 L1493.8 499.3 L1493.0 493.8Z" fill="#f1f1ef" />
<path d="M1083.0 205.0 L1095.0 202.0 L1172.0 202.0 L1175.0 215.0 L1168.0 230.0 L1160.0 240.0 L1150.0 245.0 L1140.0 250.0 L1128.0 258.0 L1118.0 265.0 L1110.0 255.0 L1100.0 247.0 L1090.0 235.0 L1085.0 220.0Z" fill="#f1f1ef"/>
<path d="M1109.7 272.0 L1118.0 262.0 L1128.0 257.0 L1136.3 267.0 L1148.0 278.7 L1141.3 285.3 L1126.3 280.3 L1111.3 280.3Z" fill="#f1f1ef"/>
<path d="M1098.0 295.3 L1114.7 298.7 L1141.3 300.3 L1139.7 310.3 L1118.0 312.0 L1101.3 308.7Z" fill="#f1f1ef"/>
<path d="M1046.3 232.0 L1056.3 237.0 L1066.3 257.0 L1058.0 252.0 L1049.7 242.0Z" fill="#f1f1ef"/>
<path d="M1073.0 243.7 L1081.3 248.7 L1083.0 255.3 L1076.3 253.7Z" fill="#f1f1ef"/>
<path d="M1081.3 275.3 L1089.7 278.7 L1088.0 285.3 L1083.0 282.0Z" fill="#f1f1ef"/>
<path d="M1061.3 283.7 L1071.3 282.0 L1073.0 295.3 L1068.0 303.7 L1063.0 295.3Z" fill="#f1f1ef"/>
<path d="M1083.0 300.3 L1088.0 302.0 L1088.0 310.3 L1083.0 307.0Z" fill="#f1f1ef"/>
<path d="M1018.0 245.3 L1026.3 247.0 L1023.0 265.3 L1016.3 262.0Z" fill="#f1f1ef"/>
<path d="M999.7 302.0 L1018.0 295.3 L1041.3 293.7 L1038.0 307.0 L1013.0 312.0Z" fill="#f1f1ef"/>
<path d="M971.3 317.0 L983.0 315.3 L1001.3 325.3 L988.0 343.7 L978.0 355.3 L968.0 343.7 L968.0 318.7Z" fill="#f1f1ef"/>
<path d="M993.0 335.3 L1009.7 335.3 L1023.0 340.3 L1036.3 333.7 L1044.7 343.7 L1054.7 368.7 L1061.3 385.3 L968.0 385.3 L968.0 368.7 L984.7 365.3 L1001.3 358.7Z" fill="#f1f1ef"/>
<path d="M1058.0 325.3 L1068.0 325.3 L1076.3 335.3 L1078.0 348.7 L1068.0 352.0 L1058.0 338.7Z" fill="#f1f1ef"/>
<path d="M1084.7 322.0 L1101.3 323.7 L1096.3 338.7 L1088.0 348.7 L1083.0 333.7Z" fill="#f1f1ef"/>
<path d="M1108.0 328.7 L1121.3 325.3 L1123.0 343.7 L1118.0 357.0 L1109.7 352.0Z" fill="#f1f1ef"/>
<path d="M1128.0 327.0 L1151.3 330.3 L1161.3 347.0 L1178.0 365.3 L1184.7 385.3 L1114.7 385.3 L1124.7 360.3 L1128.0 343.7Z" fill="#f1f1ef"/>
<path d="M1081.3 352.0 L1094.7 355.3 L1093.0 385.3 L1081.3 385.3Z" fill="#f1f1ef"/>
<path d="M1564.2 578.3 L1559.9 574.2 L1562.3 566.2 L1566.1 559.2 L1570.8 549.7 L1574.7 549.1 L1577.8 552.5 L1577.4 556.4 L1581.7 561.3 L1589.1 558.1 L1593.4 556.4 L1599.6 560.8 L1610.5 568.9 L1612.8 576.2 L1606.6 578.8 L1596.9 579.3 L1587.2 574.2 L1579.4 575.2 L1571.6 578.3Z" fill="#c2c7ca" />
<path d="M1593.4 556.4 L1587.2 551.4 L1596.9 548.6 L1602.7 545.7 L1598.8 552.5 L1594.9 556.4Z" fill="#c2c7ca" />
<path d="M1651.3 546.9 L1641.6 549.7 L1633.8 558.1 L1635.0 563.5 L1636.9 571.5 L1642.4 579.3 L1645.9 583.4 L1641.2 592.0 L1641.6 596.9 L1647.4 600.4 L1659.1 599.9 L1660.3 594.5 L1658.3 587.0 L1656.4 581.9 L1656.4 576.8 L1655.2 571.5 L1650.2 566.2 L1646.7 560.8 L1657.2 556.4 L1657.9 548.0Z" fill="#c2c7ca" />
<path d="M1092.7 549.1 L1099.0 544.0 L1107.5 536.4 L1114.5 537.6 L1121.1 543.4 L1122.3 549.7 L1114.5 550.3 L1106.7 548.0Z" fill="#c2c7ca" />
<path d="M1118.4 552.5 L1111.8 553.6 L1109.5 560.8 L1109.5 571.5 L1111.8 575.7 L1115.3 571.5 L1115.7 560.8 L1120.3 555.3Z" fill="#c2c7ca" />
<path d="M1124.2 551.4 L1134.0 553.6 L1139.8 558.1 L1134.0 562.4 L1130.9 567.8 L1127.0 563.5 L1126.2 555.3Z" fill="#c2c7ca" />
<path d="M1143.7 569.4 L1134.0 573.1 L1127.0 576.8 L1132.0 575.7 L1141.7 571.5Z" fill="#c2c7ca" />
<path d="M1140.6 567.8 L1151.5 563.5 L1154.2 566.2 L1145.6 567.3Z" fill="#c2c7ca" />
<path d="M1074.4 526.2 L1066.7 505.3 L1071.7 507.2 L1076.4 520.0Z" fill="#c2c7ca" />
<path d="M960.9 418.7 L978.4 399.6 L992.0 409.4 L980.3 414.1Z" fill="#c2c7ca" />
<path d="M995.9 453.1 L1007.5 440.7 L1027.0 440.7 L1011.4 446.6Z" fill="#c2c7ca" />
<path d="M1854.8 520.0 L1865.3 510.5 L1877.0 493.8 L1875.0 491.8 L1871.1 507.2 L1861.4 516.9Z" fill="#c2c7ca" />
<path d="M964.8 535.2 L1080.7 535.2 L1081.1 532.8 L1102.8 539.4 L1120.3 545.7 L1122.3 549.7 L1130.1 555.3 L1130.5 568.9 L1127.7 574.2 L1130.1 575.7 L1141.7 571.5 L1143.7 567.8 L1151.5 565.7 L1154.2 563.5 L1160.0 558.1 L1172.9 558.1 L1174.8 556.4 L1178.7 549.7 L1181.8 544.6 L1187.3 546.3 L1188.8 557.0" fill="none" stroke="#e3bfc5" stroke-width="1.1"/>
<path d="M995.5 620.7 L1004.8 619.8 L1019.2 626.2 L1030.1 626.2 L1030.1 623.9 L1036.7 623.9 L1044.5 634.3 L1056.2 633.0 L1062.0 641.0 L1071.7 649.7" fill="none" stroke="#e3bfc5" stroke-width="1.1"/>
<path d="M968.6 551.4 L988.1 552.5 L995.9 552.5" fill="none" stroke="#e2bcc3" stroke-width="1" stroke-dasharray="4 2"/>
<path d="M967.9 574.2 L1019.2 574.2" fill="none" stroke="#e2bcc3" stroke-width="1" stroke-dasharray="4 2"/>
<path d="M999.8 535.2 L1019.2 560.8 L1019.2 574.2" fill="none" stroke="#e2bcc3" stroke-width="1" stroke-dasharray="4 2"/>
<path d="M1019.2 558.1 L1046.4 558.1" fill="none" stroke="#e2bcc3" stroke-width="1" stroke-dasharray="4 2"/>
<path d="M1019.2 579.3 L1054.2 579.3" fill="none" stroke="#e2bcc3" stroke-width="1" stroke-dasharray="4 2"/>
<path d="M1007.5 574.2 L1007.5 599.4" fill="none" stroke="#e2bcc3" stroke-width="1" stroke-dasharray="4 2"/>
<path d="M1027.0 579.3 L1027.0 599.4 L1027.0 626.2" fill="none" stroke="#e2bcc3" stroke-width="1" stroke-dasharray="4 2"/>
<path d="M1007.5 599.4 L1054.2 599.4 L1083.0 599.4" fill="none" stroke="#e2bcc3" stroke-width="1" stroke-dasharray="4 2"/>
<path d="M984.2 574.2 L984.2 589.5 L1005.2 609.0" fill="none" stroke="#e2bcc3" stroke-width="1" stroke-dasharray="4 2"/>
<path d="M1046.4 535.2 L1046.4 579.3" fill="none" stroke="#e2bcc3" stroke-width="1" stroke-dasharray="4 2"/>
<path d="M1054.2 579.3 L1054.2 601.8 L1050.3 601.8 L1050.3 623.0 L1036.7 623.0" fill="none" stroke="#e2bcc3" stroke-width="1" stroke-dasharray="4 2"/>
<path d="M1075.6 535.2 L1075.6 566.2 L1079.5 584.5 L1083.0 601.8 L1084.6 616.1" fill="none" stroke="#e2bcc3" stroke-width="1" stroke-dasharray="4 2"/>
<path d="M1046.4 552.5 L1075.6 552.5" fill="none" stroke="#e2bcc3" stroke-width="1" stroke-dasharray="4 2"/>
<path d="M1046.4 568.9 L1075.6 568.9" fill="none" stroke="#e2bcc3" stroke-width="1" stroke-dasharray="4 2"/>
<path d="M1054.2 584.5 L1080.3 584.5" fill="none" stroke="#e2bcc3" stroke-width="1" stroke-dasharray="4 2"/>
<path d="M1062.0 601.8 L1062.0 611.4 L1083.4 614.7" fill="none" stroke="#e2bcc3" stroke-width="1" stroke-dasharray="4 2"/>
<path d="M1075.6 566.2 L1096.2 566.2" fill="none" stroke="#e2bcc3" stroke-width="1" stroke-dasharray="4 2"/>
<path d="M1078.3 581.4 L1095.5 581.4" fill="none" stroke="#e2bcc3" stroke-width="1" stroke-dasharray="4 2"/>
<path d="M1083.0 601.8 L1100.9 601.8" fill="none" stroke="#e2bcc3" stroke-width="1" stroke-dasharray="4 2"/>
<path d="M1085.3 618.4 L1097.0 618.4" fill="none" stroke="#e2bcc3" stroke-width="1" stroke-dasharray="4 2"/>
<path d="M1093.1 546.9 L1096.2 566.2 L1095.5 581.4 L1104.0 599.4 L1100.9 609.0 L1095.1 627.6 L1102.8 634.3" fill="none" stroke="#e2bcc3" stroke-width="1" stroke-dasharray="4 2"/>
<path d="M1110.6 575.7 L1109.5 594.5" fill="none" stroke="#e2bcc3" stroke-width="1" stroke-dasharray="4 2"/>
<path d="M1121.1 575.7 L1121.1 589.5" fill="none" stroke="#e2bcc3" stroke-width="1" stroke-dasharray="4 2"/>
<path d="M1137.9 574.2 L1137.9 586.0 L1157.3 586.0" fill="none" stroke="#e2bcc3" stroke-width="1" stroke-dasharray="4 2"/>
<path d="M1102.8 601.3 L1133.2 601.3 L1156.1 601.3" fill="none" stroke="#e2bcc3" stroke-width="1" stroke-dasharray="4 2"/>
<path d="M1100.9 609.0 L1128.1 609.0 L1137.9 609.0 L1145.6 613.7" fill="none" stroke="#e2bcc3" stroke-width="1" stroke-dasharray="4 2"/>
<path d="M1120.3 609.0 L1120.3 627.6" fill="none" stroke="#e2bcc3" stroke-width="1" stroke-dasharray="4 2"/>
<path d="M1107.9 609.0 L1107.1 629.8" fill="none" stroke="#e2bcc3" stroke-width="1" stroke-dasharray="4 2"/>
<path d="M1110.6 628.9 L1132.0 628.9" fill="none" stroke="#e2bcc3" stroke-width="1" stroke-dasharray="4 2"/>
<path d="M1140.6 574.2 L1158.1 574.2 L1164.3 579.3" fill="none" stroke="#e2bcc3" stroke-width="1" stroke-dasharray="4 2"/>
<path d="M1165.9 558.1 L1165.9 570.5 L1164.3 579.3" fill="none" stroke="#e2bcc3" stroke-width="1" stroke-dasharray="4 2"/>
<path d="M984.2 461.0 L984.2 505.3 L1005.6 535.2" fill="none" stroke="#e2bcc3" stroke-width="1" stroke-dasharray="4 2"/>
<path d="M1023.1 535.2 L1023.1 461.0" fill="none" stroke="#e2bcc3" stroke-width="1" stroke-dasharray="4 2"/>
<path d="M1054.2 535.2 L1054.2 461.0" fill="none" stroke="#e2bcc3" stroke-width="1" stroke-dasharray="4 2"/>
<path d="M1080.7 535.2 L1080.7 511.8 L1104.8 484.8" fill="none" stroke="#e2bcc3" stroke-width="1" stroke-dasharray="4 2"/>
<path d="M1141.7 520.0 L1141.7 549.7 L1161.2 555.9" fill="none" stroke="#e2bcc3" stroke-width="1" stroke-dasharray="4 2"/>
<path d="M964.8 461.0 L1082.2 461.0" fill="none" stroke="#e2bcc3" stroke-width="1" stroke-dasharray="4 2"/>
<path d="M1054.2 461.0 L1054.2 426.0 L984.2 391.5" fill="none" stroke="#e2bcc3" stroke-width="1" stroke-dasharray="4 2"/>
<path d="M1229.3 516.9 L1202.0 516.9 L1190.4 497.2 L1200.1 472.4" fill="none" stroke="#e2bcc3" stroke-width="1" stroke-dasharray="4 2"/>
<path d="M1190.4 557.0 L1184.5 544.0 L1194.3 541.1" fill="none" stroke="#e2bcc3" stroke-width="1" stroke-dasharray="4 2"/>
<path d="M1092.3 697.5 L1097.0 684.1 L1104.0 684.1" fill="none" stroke="#e3bfc5" stroke-width="1.1"/>
<path d="M1104.0 684.1 L1104.0 691.8 L1103.6 697.9 L1100.5 700.7" fill="none" stroke="#e3bfc5" stroke-width="1.1"/>
<path d="M1127.4 695.5 L1113.7 703.5 L1109.8 701.9" fill="none" stroke="#e3bfc5" stroke-width="1.1"/>
<path d="M1117.6 711.0 L1125.4 711.8" fill="none" stroke="#e3bfc5" stroke-width="1.1"/>
<path d="M1128.5 717.0 L1128.5 723.3" fill="none" stroke="#e3bfc5" stroke-width="1.1"/>
<path d="M1170.1 708.3 L1169.0 721.3 L1178.7 727.2 L1188.4 730.3 L1187.3 738.9 L1190.8 749.8" fill="none" stroke="#e3bfc5" stroke-width="1.1"/>
<path d="M1144.5 749.1 L1158.1 754.5 L1165.1 764.2 L1178.7 770.9" fill="none" stroke="#e3bfc5" stroke-width="1.1"/>
<path d="M1190.8 749.8 L1209.8 737.0 L1214.9 734.2 L1231.2 746.7 L1239.0 745.6 L1249.9 738.9" fill="none" stroke="#e3bfc5" stroke-width="1.1"/>
<path d="M1217.6 721.3 L1212.5 729.2 L1215.7 737.0 L1231.2 746.7" fill="none" stroke="#e3bfc5" stroke-width="1.1"/>
<path d="M1228.5 731.1 L1233.2 746.7" fill="none" stroke="#e3bfc5" stroke-width="1.1"/>
<path d="M1240.9 732.3 L1239.0 745.6" fill="none" stroke="#e3bfc5" stroke-width="1.1"/>
<path d="M1178.7 770.9 L1163.1 783.8 L1169.0 791.6 L1178.7 797.6 L1196.2 793.6 L1211.8 807.5 L1215.7 818.4 L1225.4 831.9 L1225.4 842.3 L1237.0 850.7 L1238.6 857.1 L1235.1 865.8 L1226.9 877.8 L1244.1 888.3 L1242.9 893.9" fill="none" stroke="#e3bfc5" stroke-width="1.1"/>
<path d="M1138.6 768.1 L1143.7 774.0 L1157.3 764.2 L1157.3 758.4 L1158.1 754.5" fill="none" stroke="#e3bfc5" stroke-width="1.1"/>
<path d="M1177.1 826.9 L1180.6 823.7 L1181.4 813.5 L1182.6 797.6" fill="none" stroke="#e3bfc5" stroke-width="1.1"/>
<path d="M1180.6 823.7 L1187.3 842.3 L1184.5 852.8 L1182.6 868.0 L1178.7 890.6 L1174.8 914.5 L1171.7 934.8 L1171.7 956.5 L1165.9 979.8 L1170.9 992.1 L1184.5 995.3" fill="none" stroke="#e3bfc5" stroke-width="1.1"/>
<path d="M1187.3 842.3 L1205.9 844.4 L1207.9 842.3 L1225.4 855.0 L1223.0 865.0 L1235.1 865.8" fill="none" stroke="#e3bfc5" stroke-width="1.1"/>
<path d="M1225.4 831.9 L1209.8 836.0 L1205.9 844.4" fill="none" stroke="#e3bfc5" stroke-width="1.1"/>
<path d="M1226.9 877.8 L1223.8 895.3" fill="none" stroke="#e3bfc5" stroke-width="1.1"/>
<path d="M1442.4 608.5 L1446.3 620.7 L1436.6 625.3 L1417.9 634.3 L1417.2 642.3 L1399.7 642.3" fill="none" stroke="#e3bfc5" stroke-width="1.1"/>
<path d="M1417.2 642.3 L1417.2 649.7 L1404.3 654.0 L1400.4 669.7 L1384.9 669.7" fill="none" stroke="#e3bfc5" stroke-width="1.1"/>
<path d="M1484.1 599.4 L1481.0 613.7 L1488.0 629.8 L1489.9 647.5 L1495.7 656.2 L1497.7 660.4" fill="none" stroke="#e3bfc5" stroke-width="1.1"/>
<path d="M1548.6 625.3 L1548.2 666.7 L1544.4 675.1 L1542.4 693.5 L1538.5 713.4 L1542.4 719.3 L1558.0 735.0" fill="none" stroke="#e3bfc5" stroke-width="1.1"/>
<path d="M1548.2 666.7 L1594.2 666.7" fill="none" stroke="#e3bfc5" stroke-width="1.1"/>
<path d="M1431.5 654.0 L1467.3 677.1 L1480.2 670.9 L1497.7 660.4" fill="none" stroke="#e3bfc5" stroke-width="1.1"/>
<path d="M1417.2 642.3 L1431.5 654.0 L1427.7 670.9 L1429.6 693.5 L1404.3 695.5 L1387.6 689.4" fill="none" stroke="#e3bfc5" stroke-width="1.1"/>
<path d="M1497.7 660.4 L1509.3 662.5 L1544.4 677.1" fill="none" stroke="#e3bfc5" stroke-width="1.1"/>
<path d="M1509.3 662.5 L1503.5 701.5 L1507.4 713.4 L1511.3 725.2 L1524.9 723.3 L1538.5 713.4" fill="none" stroke="#e3bfc5" stroke-width="1.1"/>
<path d="M1466.6 695.5 L1454.9 711.4 L1431.5 697.5 L1406.3 707.5 L1385.6 705.5" fill="none" stroke="#e3bfc5" stroke-width="1.1"/>
<path d="M1466.6 701.5 L1464.6 709.5 L1461.5 729.2" fill="none" stroke="#e3bfc5" stroke-width="1.1"/>
<path d="M1505.5 703.5 L1497.7 727.2 L1484.1 737.0" fill="none" stroke="#e3bfc5" stroke-width="1.1"/>
<path d="M1427.7 670.9 L1466.6 695.5 L1503.5 701.5" fill="none" stroke="#e3bfc5" stroke-width="1.1"/>
<path d="M1454.9 711.4 L1439.3 711.4 L1431.5 723.3 L1419.9 735.0" fill="none" stroke="#e3bfc5" stroke-width="1.1"/>
<path d="M1439.3 711.4 L1441.3 735.0" fill="none" stroke="#e3bfc5" stroke-width="1.1"/>
<path d="M1396.5 705.5 L1400.4 715.4 L1408.2 723.3 L1407.0 729.2" fill="none" stroke="#e3bfc5" stroke-width="1.1"/>
<path d="M1489.1 746.7 L1495.0 745.9 L1513.2 746.7 L1523.0 738.9 L1558.0 735.0 L1583.3 737.0" fill="none" stroke="#e3bfc5" stroke-width="1.1"/>
<path d="M1499.6 774.0 L1499.6 777.9 L1515.2 777.9 L1519.1 785.7 L1532.7 783.8 L1537.7 797.6 L1544.4 797.6 L1536.6 805.5 L1548.2 823.7 L1530.7 825.7" fill="none" stroke="#e3bfc5" stroke-width="1.1"/>
<path d="M1496.9 822.8 L1532.7 823.7 L1542.4 825.7" fill="none" stroke="#e3bfc5" stroke-width="1.1"/>
<path d="M1528.8 824.9 L1528.8 842.3 L1528.8 853.7 L1515.2 870.2" fill="none" stroke="#e3bfc5" stroke-width="1.1"/>
<path d="M1528.8 871.1 L1528.8 855.0" fill="none" stroke="#e3bfc5" stroke-width="1.1"/>
<path d="M1550.2 857.1 L1565.8 843.5 L1572.8 844.4 L1575.5 859.3" fill="none" stroke="#e3bfc5" stroke-width="1.1"/>
<path d="M1591.8 705.5 L1581.3 723.3 L1583.3 737.0 L1593.0 740.9 L1612.4 738.9 L1610.5 748.7 L1612.4 761.1" fill="none" stroke="#e3bfc5" stroke-width="1.1"/>
<path d="M1618.3 709.5 L1636.9 723.3 L1622.2 738.9 L1612.4 738.9" fill="none" stroke="#e3bfc5" stroke-width="1.1"/>
<path d="M1593.0 695.5 L1619.0 704.7" fill="none" stroke="#e3bfc5" stroke-width="1.1"/>
<path d="M1608.2 795.6 L1589.1 799.5 L1587.2 811.5 L1569.6 817.6 L1572.8 843.5" fill="none" stroke="#e3bfc5" stroke-width="1.1"/>
<path d="M1571.6 787.7 L1565.8 772.0 L1566.9 758.4 L1571.6 737.0" fill="none" stroke="#e3bfc5" stroke-width="1.1"/>
<path d="M1583.3 758.4 L1603.5 772.4" fill="none" stroke="#e3bfc5" stroke-width="1.1"/>
<path d="M1566.9 758.4 L1583.3 758.4 L1583.3 737.0" fill="none" stroke="#e3bfc5" stroke-width="1.1"/>
<path d="M1569.6 817.6 L1556.0 825.7 L1549.4 824.9" fill="none" stroke="#e3bfc5" stroke-width="1.1"/>
<path d="M1536.6 805.5 L1570.8 786.5" fill="none" stroke="#e3bfc5" stroke-width="1.1"/>
<path d="M1567.7 807.5 L1587.2 799.5" fill="none" stroke="#e3bfc5" stroke-width="1.1"/>
<path d="M1594.2 666.7 L1600.8 683.3" fill="none" stroke="#e3bfc5" stroke-width="1.1"/>
<path d="M1509.3 738.9 L1495.7 772.0" fill="none" stroke="#e3bfc5" stroke-width="1.1"/>
<path d="M1497.7 823.7 L1540.5 819.6" fill="none" stroke="#e3bfc5" stroke-width="1.1"/>
<path d="M1530.7 378.8 L1509.3 409.4 L1499.6 432.2 L1499.6 453.1 L1495.7 468.6" fill="none" stroke="#e3bfc5" stroke-width="1.1"/>
<path d="M1530.7 378.8 L1543.2 399.6 L1544.7 411.3" fill="none" stroke="#e3bfc5" stroke-width="1.1"/>
<path d="M1561.9 373.3 L1567.7 389.4 L1565.8 418.7 L1573.5 444.9 L1559.1 457.1" fill="none" stroke="#e3bfc5" stroke-width="1.1"/>
<path d="M1559.9 465.6 L1558.0 479.7 L1559.9 490.4 L1555.3 497.2 L1542.4 503.9 L1542.8 520.0 L1544.4 526.2 L1538.5 538.2" fill="none" stroke="#e3bfc5" stroke-width="1.1"/>
<path d="M1548.2 464.8 L1558.0 479.7" fill="none" stroke="#e3bfc5" stroke-width="1.1"/>
<path d="M1534.6 479.0 L1554.1 490.4 L1536.6 497.2" fill="none" stroke="#e3bfc5" stroke-width="1.1"/>
<path d="M1532.7 486.9 L1554.1 490.4" fill="none" stroke="#e3bfc5" stroke-width="1.1"/>
<path d="M1506.2 503.9 L1509.3 523.1 L1509.3 524.4 L1524.9 532.2 L1538.5 535.2" fill="none" stroke="#e3bfc5" stroke-width="1.1"/>
<path d="M1581.3 516.9 L1591.0 526.2 L1606.6 532.2 L1599.6 546.9" fill="none" stroke="#e3bfc5" stroke-width="1.1"/>
<path d="M1542.8 520.0 L1567.7 520.0 L1581.3 516.9" fill="none" stroke="#e3bfc5" stroke-width="1.1"/>
<path d="M1538.5 538.2 L1552.1 541.1 L1567.7 549.7" fill="none" stroke="#e3bfc5" stroke-width="1.1"/>
<path d="M1444.0 567.3 L1463.1 571.5" fill="none" stroke="#e3bfc5" stroke-width="1.1"/>
<path d="M1460.7 523.1 L1474.3 532.2 L1482.1 535.2 L1480.2 544.0 L1474.3 552.5 L1477.5 558.1 L1480.2 564.6" fill="none" stroke="#e3bfc5" stroke-width="1.1"/>
<path d="M1425.7 574.2 L1423.8 589.5 L1422.2 598.4" fill="none" stroke="#e3bfc5" stroke-width="1.1"/>
<path d="M1488.0 498.6 L1484.8 497.9" fill="none" stroke="#e3bfc5" stroke-width="1.1"/>
<path d="M1479.0 508.5 L1474.3 523.1 L1475.5 532.2" fill="none" stroke="#e3bfc5" stroke-width="1.1"/>
<path d="M1497.7 527.4 L1504.7 536.4 L1501.6 543.4 L1489.9 544.0 L1480.2 543.4" fill="none" stroke="#e3bfc5" stroke-width="1.1"/>
<path d="M1477.8 553.1 L1486.0 549.7 L1497.7 546.9 L1504.3 549.7" fill="none" stroke="#e3bfc5" stroke-width="1.1"/>
<path d="M1504.3 552.5 L1513.2 549.7 L1524.9 558.1 L1538.5 574.2 L1532.7 579.3 L1530.7 576.8" fill="none" stroke="#e3bfc5" stroke-width="1.1"/>
<path d="M1517.1 541.1 L1538.5 538.2" fill="none" stroke="#e3bfc5" stroke-width="1.1"/>
<path d="M1515.2 544.0 L1530.7 552.5 L1538.5 563.5 L1540.1 565.1 L1561.9 563.5" fill="none" stroke="#e3bfc5" stroke-width="1.1"/>
<path d="M1538.5 577.8 L1553.3 575.7 L1553.3 579.3" fill="none" stroke="#e3bfc5" stroke-width="1.1"/>
<path d="M1556.0 539.9 L1560.7 555.3" fill="none" stroke="#e3bfc5" stroke-width="1.1"/>
<path d="M1591.0 600.4 L1598.8 600.8 L1615.5 598.9 L1624.1 597.9 L1623.3 587.0 L1620.2 579.3 L1612.4 576.8" fill="none" stroke="#e3bfc5" stroke-width="1.1"/>
<path d="M1615.5 598.9 L1610.5 616.5 L1602.7 622.1 L1591.4 635.6" fill="none" stroke="#e3bfc5" stroke-width="1.1"/>
<path d="M1603.5 623.0 L1624.9 636.5 L1635.8 636.1" fill="none" stroke="#e3bfc5" stroke-width="1.1"/>
<path d="M1624.1 597.9 L1629.9 609.0 L1629.9 618.4 L1636.6 625.3 L1639.7 632.1" fill="none" stroke="#e3bfc5" stroke-width="1.1"/>
<path d="M1617.5 689.4 L1622.2 685.3 L1653.3 679.2 L1663.0 687.4" fill="none" stroke="#e3bfc5" stroke-width="1.1"/>
<path d="M1653.3 679.2 L1665.7 663.8 L1651.7 657.4" fill="none" stroke="#e3bfc5" stroke-width="1.1"/>
<path d="M1610.5 616.5 L1591.0 616.1 L1589.1 620.7" fill="none" stroke="#e3bfc5" stroke-width="1.1"/>
<path d="M1660.7 597.9 L1668.8 592.0 L1682.5 596.9 L1689.1 606.6 L1686.3 613.7 L1687.9 633.0 L1696.1 644.5 L1690.6 653.1" fill="none" stroke="#e3bfc5" stroke-width="1.1"/>
<path d="M1641.6 549.7 L1631.9 538.2 L1647.4 521.9 L1665.0 523.1 L1690.2 523.1 L1703.8 503.9 L1735.0 500.6 L1762.2 523.1 L1790.6 534.6" fill="none" stroke="#e3bfc5" stroke-width="1.1"/>
<path d="M1657.2 558.1 L1668.8 579.3 L1688.3 566.2 L1717.5 579.3 L1762.2 571.5 L1763.4 558.1 L1790.6 534.6" fill="none" stroke="#e3bfc5" stroke-width="1.1"/>
<path d="M1689.1 606.6 L1709.7 597.9 L1725.2 599.4 L1727.2 592.0 L1742.4 599.4" fill="none" stroke="#e3bfc5" stroke-width="1.1"/>
<path d="M1668.8 579.3 L1709.7 597.9" fill="none" stroke="#e3bfc5" stroke-width="1.1"/>
<path d="M1717.5 579.3 L1735.0 581.9 L1727.2 587.0" fill="none" stroke="#e3bfc5" stroke-width="1.1"/>
<path d="M1790.6 534.6 L1771.9 558.1 L1762.2 571.5 L1742.8 581.9 L1742.4 599.4 L1753.6 606.6 L1758.3 620.7 L1766.5 632.1 L1793.3 641.8 L1808.9 641.0 L1828.3 645.4 L1834.2 654.0 L1840.0 666.7 L1847.0 668.8 L1853.6 664.6 L1869.2 668.8" fill="none" stroke="#e3bfc5" stroke-width="1.1"/>
<path d="M1790.6 534.6 L1805.0 532.2 L1805.0 552.5 L1824.4 570.5 L1859.5 571.5 L1885.9 576.2 L1898.3 558.1 L1910.0 549.7" fill="none" stroke="#e3bfc5" stroke-width="1.1"/>
<path d="M1792.2 526.2 L1835.7 516.9 L1863.3 527.4 L1894.5 531.0 L1917.8 510.5" fill="none" stroke="#e3bfc5" stroke-width="1.1"/>
<path d="M1753.6 606.6 L1740.8 619.3 L1736.9 629.8 L1725.2 641.0 L1718.6 657.0" fill="none" stroke="#e3bfc5" stroke-width="1.1"/>
<path d="M1742.4 599.4 L1729.1 606.6 L1725.2 613.7 L1719.4 625.3 L1707.7 634.3 L1687.9 633.0" fill="none" stroke="#e3bfc5" stroke-width="1.1"/>
<path d="M1766.5 632.1 L1793.3 647.5 L1808.9 645.4 L1808.9 654.0 L1810.8 666.7 L1810.0 670.1" fill="none" stroke="#e3bfc5" stroke-width="1.1"/>
<path d="M1793.3 647.5 L1795.3 656.2 L1797.2 666.7" fill="none" stroke="#e3bfc5" stroke-width="1.1"/>
<path d="M1830.3 641.0 L1834.2 660.4 L1840.8 673.0 L1830.3 681.3 L1834.2 691.4 L1836.1 707.5 L1834.2 715.4" fill="none" stroke="#e3bfc5" stroke-width="1.1"/>
<path d="M1840.8 673.0 L1850.1 683.3 L1861.4 695.5" fill="none" stroke="#e3bfc5" stroke-width="1.1"/>
<path d="M1851.7 697.5 L1855.6 713.4" fill="none" stroke="#e3bfc5" stroke-width="1.1"/>
<path d="M1849.7 664.6 L1859.5 683.3 L1869.2 697.5" fill="none" stroke="#e3bfc5" stroke-width="1.1"/>
<path d="M1840.0 729.2 L1847.8 731.1" fill="none" stroke="#e3bfc5" stroke-width="1.1"/>
<path d="M1612.4 576.8 L1606.6 566.2 L1628.0 574.2 L1631.9 579.3" fill="none" stroke="#e3bfc5" stroke-width="1.1"/>
<text x="1003.8" y="470.0" font-size="13.3" fill="#939393" textLength="60.9" lengthAdjust="spacing">CANADA</text>
<text x="998.3" y="602.8" font-size="14.0" fill="#939393" textLength="131.1" lengthAdjust="spacing">UNITED STATES OF</text>
<text x="1031.7" y="615.0" font-size="14.4" fill="#939393" textLength="65.8" lengthAdjust="spacing">AMERICA</text>
<text x="1037.8" y="681.7" font-size="14.4" fill="#939393" textLength="55.0" lengthAdjust="spacing">MEXICO</text>
<text x="1129.4" y="760.0" font-size="14.0" fill="#939393" textLength="76.1" lengthAdjust="spacing">COLOMBIA</text>
<text x="1223.6" y="811.3" font-size="14.0" fill="#939393" textLength="47.4" lengthAdjust="spacing">BRAZIL</text>
<text x="1161.0" y="916.1" font-size="14.1" fill="#939393" textLength="81.2" lengthAdjust="spacing">ARGENTINA</text>
<text x="1378.5" y="516.3" font-size="13.4" fill="#939393" textLength="125.2" lengthAdjust="spacing">UNITED KINGDOM</text>
<text x="1530.4" y="524.4" font-size="12.3" fill="#939393" textLength="57.7" lengthAdjust="spacing">POLAND</text>
<text x="1458.3" y="538.9" font-size="12.7" fill="#939393" textLength="70.0" lengthAdjust="spacing">GERMANY</text>
<text x="1543.9" y="548.6" font-size="10.9" fill="#939393" textLength="68.1" lengthAdjust="spacing">UKRAINE</text>
<text x="1432.4" y="565.5" font-size="11.9" fill="#939393" textLength="55.7" lengthAdjust="spacing">FRANCE</text>
<text x="1484.9" y="586.8" font-size="12.6" fill="#939393" textLength="32.4" lengthAdjust="spacing">ITALY</text>
<text x="1420.7" y="599.8" font-size="13.7" fill="#939393" textLength="42.3" lengthAdjust="spacing">SPAIN</text>
<text x="1562.0" y="606.3" font-size="13.5" fill="#939393" textLength="53.0" lengthAdjust="spacing">TURKEY</text>
<text x="1387.4" y="643.8" font-size="13.7" fill="#939393" textLength="74.1" lengthAdjust="spacing">MOROCCO</text>
<text x="1435.6" y="658.1" font-size="13.5" fill="#939393" textLength="60.1" lengthAdjust="spacing">ALGERIA</text>
<text x="1543.0" y="665.2" font-size="13.4" fill="#939393" textLength="46.3" lengthAdjust="spacing">EGYPT</text>
<text x="1449.0" y="733.3" font-size="13.5" fill="#939393" textLength="64.0" lengthAdjust="spacing">NIGERIA</text>
<text x="1571.2" y="731.1" font-size="12.3" fill="#939393" textLength="63.3" lengthAdjust="spacing">ETHIOPIA</text>
<text x="1579.0" y="764.5" font-size="12.4" fill="#939393" textLength="46.6" lengthAdjust="spacing">KENYA</text>
<text x="1559.3" y="796.3" font-size="13.4" fill="#939393" textLength="67.4" lengthAdjust="spacing">TANZANIA</text>
<text x="1497.8" y="887.7" font-size="13.8" fill="#939393" textLength="104.4" lengthAdjust="spacing">SOUTH AFRICA</text>
<text x="1806.1" y="439.4" font-size="13.5" fill="#939393" textLength="51.9" lengthAdjust="spacing">RUSSIA</text>
<text x="1662.7" y="614.4" font-size="13.5" fill="#939393" textLength="97.8" lengthAdjust="spacing">AFGHANISTAN</text>
<text x="1643.9" y="635.2" font-size="12.7" fill="#939393" textLength="31.1" lengthAdjust="spacing">IRAN</text>
<text x="1696.4" y="647.5" font-size="13.5" fill="#939393" textLength="67.4" lengthAdjust="spacing">PAKISTAN</text>
<text x="1739.3" y="681.8" font-size="12.6" fill="#939393" textLength="37.6" lengthAdjust="spacing">INDIA</text>
<text x="1838.5" y="625.5" font-size="12.7" fill="#939393" textLength="44.7" lengthAdjust="spacing">CHINA</text>
<text x="1828.8" y="694.3" font-size="12.6" fill="#939393" textLength="71.9" lengthAdjust="spacing">MYANMAR</text>
<text x="1810.6" y="712.5" font-size="13.5" fill="#939393" textLength="64.4" lengthAdjust="spacing">THAILAND</text>
<text x="1885.2" y="721.0" font-size="12.8" fill="#939393" textLength="99.8" lengthAdjust="spacing">PHILIPPINES</text>
<text x="1858.0" y="789.6" font-size="13.5" fill="#939393" textLength="82.0" lengthAdjust="spacing">INDONESIA</text>
<circle cx="1029.3" cy="476.2" r="19.8" fill="#f8d97b" fill-opacity="0.88" stroke="#fbfbfb" stroke-width="1.4"/>
<circle cx="1076.5" cy="603.4" r="32.7" fill="#8c3a30" fill-opacity="0.88" stroke="#fbfbfb" stroke-width="1.4"/>
<circle cx="1057.8" cy="662.5" r="13.2" fill="#fae28a" fill-opacity="0.88" stroke="#fbfbfb" stroke-width="1.4"/>
<circle cx="1235" cy="551.4" r="9.5" fill="#a3a6a9" fill-opacity="0.88" stroke="#fbfbfb" stroke-width="1.4"/>
<circle cx="1202" cy="625.5" r="9.5" fill="#a3a6a9" fill-opacity="0.88" stroke="#fbfbfb" stroke-width="1.4"/>
<circle cx="1301.7" cy="307" r="9.4" fill="#a3a6a9" fill-opacity="0.88" stroke="#fbfbfb" stroke-width="1.4"/>
<circle cx="1150.6" cy="657.6" r="9.5" fill="#a3a6a9" fill-opacity="0.88" stroke="#fbfbfb" stroke-width="1.4"/>
<circle cx="1151.9" cy="671.5" r="9.5" fill="#fae28a" fill-opacity="0.88" stroke="#fbfbfb" stroke-width="1.4"/>
<circle cx="1137.0" cy="680.9" r="9.5" fill="#a3a6a9" fill-opacity="0.88" stroke="#fbfbfb" stroke-width="1.4"/>
<circle cx="1172.3" cy="668.6" r="9.5" fill="#a3a6a9" fill-opacity="0.88" stroke="#fbfbfb" stroke-width="1.4"/>
<circle cx="1181.5" cy="682.5" r="9.5" fill="#fae28a" fill-opacity="0.88" stroke="#fbfbfb" stroke-width="1.4"/>
<circle cx="1153.2" cy="685.5" r="9.5" fill="#a3a6a9" fill-opacity="0.88" stroke="#fbfbfb" stroke-width="1.4"/>
<circle cx="1172.3" cy="680.9" r="9.5" fill="#fae28a" fill-opacity="0.88" stroke="#fbfbfb" stroke-width="1.4"/>
<circle cx="1203.8" cy="683.1" r="9.5" fill="#a3a6a9" fill-opacity="0.88" stroke="#fbfbfb" stroke-width="1.4"/>
<circle cx="1211.5" cy="690.9" r="9.5" fill="#a3a6a9" fill-opacity="0.88" stroke="#fbfbfb" stroke-width="1.4"/>
<circle cx="1223.2" cy="705.2" r="9.5" fill="#fae28a" fill-opacity="0.88" stroke="#fbfbfb" stroke-width="1.4"/>
<circle cx="1215.4" cy="707.8" r="9.5" fill="#a3a6a9" fill-opacity="0.88" stroke="#fbfbfb" stroke-width="1.4"/>
<circle cx="1216.1" cy="716.2" r="9.5" fill="#a3a6a9" fill-opacity="0.88" stroke="#fbfbfb" stroke-width="1.4"/>
<circle cx="1108.5" cy="703.2" r="9.5" fill="#fae28a" fill-opacity="0.88" stroke="#fbfbfb" stroke-width="1.4"/>
<circle cx="1109.2" cy="687.0" r="9.5" fill="#fae28a" fill-opacity="0.88" stroke="#fbfbfb" stroke-width="1.4"/>
<circle cx="1100.7" cy="697.7" r="9.5" fill="#fae28a" fill-opacity="0.88" stroke="#fbfbfb" stroke-width="1.4"/>
<circle cx="1124.7" cy="705.8" r="9.5" fill="#a3a6a9" fill-opacity="0.88" stroke="#fbfbfb" stroke-width="1.4"/>
<circle cx="1116.7" cy="698.3" r="9.5" fill="#fae28a" fill-opacity="0.88" stroke="#fbfbfb" stroke-width="1.4"/>
<circle cx="1138.1" cy="723.1" r="9.5" fill="#a3a6a9" fill-opacity="0.88" stroke="#fbfbfb" stroke-width="1.4"/>
<circle cx="1127.3" cy="718.1" r="9.5" fill="#fae28a" fill-opacity="0.88" stroke="#fbfbfb" stroke-width="1.4"/>
<circle cx="1189.5" cy="709.1" r="9.5" fill="#a3a6a9" fill-opacity="0.88" stroke="#fbfbfb" stroke-width="1.4"/>
<circle cx="1182.4" cy="707.8" r="9.5" fill="#fae28a" fill-opacity="0.88" stroke="#fbfbfb" stroke-width="1.4"/>
<circle cx="1197" cy="724.3" r="9.5" fill="#a3a6a9" fill-opacity="0.88" stroke="#fbfbfb" stroke-width="1.4"/>
<circle cx="1172.3" cy="742.1" r="9.5" fill="#a3a6a9" fill-opacity="0.88" stroke="#fbfbfb" stroke-width="1.4"/>
<circle cx="1224.5" cy="735.6" r="9.5" fill="#a3a6a9" fill-opacity="0.88" stroke="#fbfbfb" stroke-width="1.4"/>
<circle cx="1237.5" cy="740.8" r="9.5" fill="#a3a6a9" fill-opacity="0.88" stroke="#fbfbfb" stroke-width="1.4"/>
<circle cx="1248.5" cy="738.9" r="9.5" fill="#a3a6a9" fill-opacity="0.88" stroke="#fbfbfb" stroke-width="1.4"/>
<circle cx="1150.5" cy="761.2" r="9.6" fill="#f6c05f" fill-opacity="0.88" stroke="#fbfbfb" stroke-width="1.4"/>
<circle cx="1161" cy="795.5" r="9.6" fill="#fae28a" fill-opacity="0.88" stroke="#fbfbfb" stroke-width="1.4"/>
<circle cx="1260.9" cy="794.1" r="12.9" fill="#f8d97b" fill-opacity="0.88" stroke="#fbfbfb" stroke-width="1.4"/>
<circle cx="1206.3" cy="827.1" r="9.6" fill="#fae28a" fill-opacity="0.88" stroke="#fbfbfb" stroke-width="1.4"/>
<circle cx="1227" cy="848.6" r="9.6" fill="#fae28a" fill-opacity="0.88" stroke="#fbfbfb" stroke-width="1.4"/>
<circle cx="1236.5" cy="893.7" r="9.6" fill="#fae28a" fill-opacity="0.88" stroke="#fbfbfb" stroke-width="1.4"/>
<circle cx="1204.9" cy="900.3" r="9.6" fill="#a3a6a9" fill-opacity="0.88" stroke="#fbfbfb" stroke-width="1.4"/>
<circle cx="1174.8" cy="908.9" r="9.6" fill="#fae28a" fill-opacity="0.88" stroke="#fbfbfb" stroke-width="1.4"/>
<circle cx="1221.3" cy="990.7" r="9.6" fill="#a3a6a9" fill-opacity="0.88" stroke="#fbfbfb" stroke-width="1.4"/>
<circle cx="1431.4" cy="819.9" r="9.6" fill="#a3a6a9" fill-opacity="0.88" stroke="#fbfbfb" stroke-width="1.4"/>
<circle cx="1383.4" cy="421.5" r="10" fill="#fae28a" fill-opacity="0.88" stroke="#fbfbfb" stroke-width="1.4"/>
<circle cx="1426.2" cy="445.9" r="10.2" fill="#a3a6a9" fill-opacity="0.88" stroke="#fbfbfb" stroke-width="1.4"/>
<circle cx="1512.1" cy="445.9" r="16" fill="#fae28a" fill-opacity="0.88" stroke="#fbfbfb" stroke-width="1.4"/>
<circle cx="1559.7" cy="431.1" r="12.8" fill="#fae28a" fill-opacity="0.88" stroke="#fbfbfb" stroke-width="1.4"/>
<circle cx="1484.4" cy="465.2" r="9.6" fill="#fae28a" fill-opacity="0.88" stroke="#fbfbfb" stroke-width="1.4"/>
<circle cx="1488.9" cy="488.9" r="13" fill="#fae28a" fill-opacity="0.88" stroke="#fbfbfb" stroke-width="1.4"/>
<circle cx="1552.6" cy="473" r="9.6" fill="#fae28a" fill-opacity="0.88" stroke="#fbfbfb" stroke-width="1.4"/>
<circle cx="1546" cy="496.3" r="9.6" fill="#fae28a" fill-opacity="0.88" stroke="#fbfbfb" stroke-width="1.4"/>
<circle cx="1547.4" cy="488.9" r="9.6" fill="#fae28a" fill-opacity="0.88" stroke="#fbfbfb" stroke-width="1.4"/>
<circle cx="1561.4" cy="513" r="9.4" fill="#fae28a" fill-opacity="0.88" stroke="#fbfbfb" stroke-width="1.4"/>
<circle cx="1528.3" cy="516.8" r="16.2" fill="#fae28a" fill-opacity="0.88" stroke="#fbfbfb" stroke-width="1.4"/>
<circle cx="1573.7" cy="536.3" r="12.6" fill="#fae28a" fill-opacity="0.88" stroke="#fbfbfb" stroke-width="1.4"/>
<circle cx="1419.4" cy="511.7" r="11.5" fill="#f6c05f" fill-opacity="0.88" stroke="#fbfbfb" stroke-width="1.4"/>
<circle cx="1477.8" cy="516.2" r="14.3" fill="#f8d97b" fill-opacity="0.88" stroke="#fbfbfb" stroke-width="1.4"/>
<circle cx="1496.6" cy="519.4" r="12.3" fill="#f8d97b" fill-opacity="0.88" stroke="#fbfbfb" stroke-width="1.4"/>
<circle cx="1471.3" cy="535" r="16.8" fill="#f8d97b" fill-opacity="0.88" stroke="#fbfbfb" stroke-width="1.4"/>
<circle cx="1460.9" cy="549.9" r="17.5" fill="#f4a440" fill-opacity="0.88" stroke="#fbfbfb" stroke-width="1.4"/>
<circle cx="1501.1" cy="581.7" r="18.1" fill="#f1b24d" fill-opacity="0.88" stroke="#fbfbfb" stroke-width="1.4"/>
<circle cx="1446.5" cy="508.8" r="23.2" fill="#ea922c" fill-opacity="0.88" stroke="#fbfbfb" stroke-width="1.4"/>
<circle cx="1484.9" cy="551.2" r="19.4" fill="#fae28a" fill-opacity="0.88" stroke="#fbfbfb" stroke-width="1.4"/>
<circle cx="1513.4" cy="534.3" r="9.7" fill="#fae28a" fill-opacity="0.88" stroke="#fbfbfb" stroke-width="1.4"/>
<circle cx="1530.9" cy="538.9" r="9.5" fill="#fae28a" fill-opacity="0.88" stroke="#fbfbfb" stroke-width="1.4"/>
<circle cx="1527" cy="549.9" r="9.7" fill="#fae28a" fill-opacity="0.88" stroke="#fbfbfb" stroke-width="1.4"/>
<circle cx="1550.4" cy="555.1" r="9.4" fill="#fae28a" fill-opacity="0.88" stroke="#fbfbfb" stroke-width="1.4"/>
<circle cx="1565.9" cy="550.6" r="9.4" fill="#fae28a" fill-opacity="0.88" stroke="#fbfbfb" stroke-width="1.4"/>
<circle cx="1512.8" cy="562.2" r="9.7" fill="#fae28a" fill-opacity="0.88" stroke="#fbfbfb" stroke-width="1.4"/>
<circle cx="1535.4" cy="566.1" r="9.4" fill="#fae28a" fill-opacity="0.88" stroke="#fbfbfb" stroke-width="1.4"/>
<circle cx="1551.6" cy="573.9" r="9.4" fill="#fae28a" fill-opacity="0.88" stroke="#fbfbfb" stroke-width="1.4"/>
<circle cx="1501.8" cy="568.7" r="9.4" fill="#fae28a" fill-opacity="0.88" stroke="#fbfbfb" stroke-width="1.4"/>
<circle cx="1481.7" cy="570.6" r="9.4" fill="#fae28a" fill-opacity="0.88" stroke="#fbfbfb" stroke-width="1.4"/>
<circle cx="1529" cy="581.7" r="9.4" fill="#fae28a" fill-opacity="0.88" stroke="#fbfbfb" stroke-width="1.4"/>
<circle cx="1536.7" cy="589.4" r="9.4" fill="#fae28a" fill-opacity="0.88" stroke="#fbfbfb" stroke-width="1.4"/>
<circle cx="1459" cy="575.2" r="9.8" fill="#fae28a" fill-opacity="0.88" stroke="#fbfbfb" stroke-width="1.4"/>
<circle cx="1438.2" cy="590.7" r="19.4" fill="#f6c05f" fill-opacity="0.88" stroke="#fbfbfb" stroke-width="1.4"/>
<circle cx="1417.5" cy="592" r="9.5" fill="#f6c05f" fill-opacity="0.88" stroke="#fbfbfb" stroke-width="1.4"/>
<circle cx="1433" cy="605.6" r="9.7" fill="#fae28a" fill-opacity="0.88" stroke="#fbfbfb" stroke-width="1.4"/>
<circle cx="1429.2" cy="626.4" r="9.4" fill="#fae28a" fill-opacity="0.88" stroke="#fbfbfb" stroke-width="1.4"/>
<circle cx="1509.5" cy="607.6" r="9.7" fill="#fae28a" fill-opacity="0.88" stroke="#fbfbfb" stroke-width="1.4"/>
<circle cx="1488.8" cy="619.2" r="9.4" fill="#fae28a" fill-opacity="0.88" stroke="#fbfbfb" stroke-width="1.4"/>
<circle cx="1581" cy="611.2" r="9.4" fill="#fae28a" fill-opacity="0.88" stroke="#fbfbfb" stroke-width="1.4"/>
<circle cx="1590.7" cy="615.7" r="9.4" fill="#fae28a" fill-opacity="0.88" stroke="#fbfbfb" stroke-width="1.4"/>
<circle cx="1591.4" cy="593.4" r="12.8" fill="#f4a440" fill-opacity="0.88" stroke="#fbfbfb" stroke-width="1.4"/>
<circle cx="1603.7" cy="609.9" r="9.4" fill="#a3a6a9" fill-opacity="0.88" stroke="#fbfbfb" stroke-width="1.4"/>
<circle cx="1599.8" cy="626.8" r="9.4" fill="#a3a6a9" fill-opacity="0.88" stroke="#fbfbfb" stroke-width="1.4"/>
<circle cx="1588.1" cy="628.7" r="9.4" fill="#fae28a" fill-opacity="0.88" stroke="#fbfbfb" stroke-width="1.4"/>
<circle cx="1622.5" cy="576.9" r="9.4" fill="#fae28a" fill-opacity="0.88" stroke="#fbfbfb" stroke-width="1.4"/>
<circle cx="1625.7" cy="588.5" r="9.4" fill="#fae28a" fill-opacity="0.88" stroke="#fbfbfb" stroke-width="1.4"/>
<circle cx="1637.4" cy="585.3" r="9.4" fill="#fae28a" fill-opacity="0.88" stroke="#fbfbfb" stroke-width="1.4"/>
<circle cx="1619.9" cy="622.2" r="9.4" fill="#fae28a" fill-opacity="0.88" stroke="#fbfbfb" stroke-width="1.4"/>
<circle cx="1664.6" cy="618.3" r="9.4" fill="#f6c05f" fill-opacity="0.88" stroke="#fbfbfb" stroke-width="1.4"/>
<circle cx="1697.7" cy="575.6" r="9.4" fill="#fae28a" fill-opacity="0.88" stroke="#fbfbfb" stroke-width="1.4"/>
<circle cx="1745" cy="576.9" r="9.4" fill="#fae28a" fill-opacity="0.88" stroke="#fbfbfb" stroke-width="1.4"/>
<circle cx="1705.5" cy="619.6" r="9.4" fill="#fae28a" fill-opacity="0.88" stroke="#fbfbfb" stroke-width="1.4"/>
<circle cx="1723.6" cy="635.8" r="9.4" fill="#fae28a" fill-opacity="0.88" stroke="#fbfbfb" stroke-width="1.4"/>
<circle cx="1637.4" cy="637.8" r="9.4" fill="#fae28a" fill-opacity="0.88" stroke="#fbfbfb" stroke-width="1.4"/>
<circle cx="1625.1" cy="660.5" r="13" fill="#fae28a" fill-opacity="0.88" stroke="#fbfbfb" stroke-width="1.4"/>
<circle cx="1649" cy="649.4" r="9.4" fill="#fae28a" fill-opacity="0.88" stroke="#fbfbfb" stroke-width="1.4"/>
<circle cx="1668.5" cy="658.5" r="9.4" fill="#a3a6a9" fill-opacity="0.88" stroke="#fbfbfb" stroke-width="1.4"/>
<circle cx="1652.3" cy="656.6" r="9.4" fill="#fae28a" fill-opacity="0.88" stroke="#fbfbfb" stroke-width="1.4"/>
<circle cx="1675.6" cy="670.2" r="9.4" fill="#fae28a" fill-opacity="0.88" stroke="#fbfbfb" stroke-width="1.4"/>
<circle cx="1600.5" cy="693.5" r="9.4" fill="#fae28a" fill-opacity="0.88" stroke="#fbfbfb" stroke-width="1.4"/>
<circle cx="1648.4" cy="690.9" r="9.4" fill="#fae28a" fill-opacity="0.88" stroke="#fbfbfb" stroke-width="1.4"/>
<circle cx="1464.4" cy="645.8" r="9.4" fill="#fae28a" fill-opacity="0.88" stroke="#fbfbfb" stroke-width="1.4"/>
<circle cx="1521.5" cy="647.1" r="9.4" fill="#a3a6a9" fill-opacity="0.88" stroke="#fbfbfb" stroke-width="1.4"/>
<circle cx="1567.8" cy="657.8" r="9.4" fill="#fae28a" fill-opacity="0.88" stroke="#fbfbfb" stroke-width="1.4"/>
<circle cx="1362" cy="697" r="10.2" fill="#a3a6a9" fill-opacity="0.88" stroke="#fbfbfb" stroke-width="1.4"/>
<circle cx="1401.6" cy="659.2" r="9.4" fill="#a3a6a9" fill-opacity="0.88" stroke="#fbfbfb" stroke-width="1.4"/>
<circle cx="1411.3" cy="682.1" r="9.4" fill="#a3a6a9" fill-opacity="0.88" stroke="#fbfbfb" stroke-width="1.4"/>
<circle cx="1391.8" cy="704.2" r="9.4" fill="#a3a6a9" fill-opacity="0.88" stroke="#fbfbfb" stroke-width="1.4"/>
<circle cx="1397.7" cy="710.6" r="9.4" fill="#a3a6a9" fill-opacity="0.88" stroke="#fbfbfb" stroke-width="1.4"/>
<circle cx="1394.4" cy="699" r="9.4" fill="#fae28a" fill-opacity="0.88" stroke="#fbfbfb" stroke-width="1.4"/>
<circle cx="1410" cy="715.2" r="9.4" fill="#a3a6a9" fill-opacity="0.88" stroke="#fbfbfb" stroke-width="1.4"/>
<circle cx="1406.1" cy="724.3" r="9.4" fill="#fae28a" fill-opacity="0.88" stroke="#fbfbfb" stroke-width="1.4"/>
<circle cx="1416.5" cy="731.4" r="9.4" fill="#fae28a" fill-opacity="0.88" stroke="#fbfbfb" stroke-width="1.4"/>
<circle cx="1448.2" cy="686" r="9.4" fill="#fae28a" fill-opacity="0.88" stroke="#fbfbfb" stroke-width="1.4"/>
<circle cx="1446.3" cy="709.3" r="9.4" fill="#a3a6a9" fill-opacity="0.88" stroke="#fbfbfb" stroke-width="1.4"/>
<circle cx="1449.5" cy="730.1" r="9.4" fill="#a3a6a9" fill-opacity="0.88" stroke="#fbfbfb" stroke-width="1.4"/>
<circle cx="1462.5" cy="719.1" r="9.4" fill="#fae28a" fill-opacity="0.88" stroke="#fbfbfb" stroke-width="1.4"/>
<circle cx="1489.1" cy="691.8" r="9.4" fill="#a3a6a9" fill-opacity="0.88" stroke="#fbfbfb" stroke-width="1.4"/>
<circle cx="1483.2" cy="720.4" r="9.4" fill="#a3a6a9" fill-opacity="0.88" stroke="#fbfbfb" stroke-width="1.4"/>
<circle cx="1506.6" cy="727.5" r="9.4" fill="#fae28a" fill-opacity="0.88" stroke="#fbfbfb" stroke-width="1.4"/>
<circle cx="1524.1" cy="701.6" r="9.4" fill="#a3a6a9" fill-opacity="0.88" stroke="#fbfbfb" stroke-width="1.4"/>
<circle cx="1565.3" cy="709.7" r="9.4" fill="#a3a6a9" fill-opacity="0.88" stroke="#fbfbfb" stroke-width="1.4"/>
<circle cx="1479.3" cy="756" r="9.4" fill="#a3a6a9" fill-opacity="0.88" stroke="#fbfbfb" stroke-width="1.4"/>
<circle cx="1494.2" cy="751.5" r="9.4" fill="#a3a6a9" fill-opacity="0.88" stroke="#fbfbfb" stroke-width="1.4"/>
<circle cx="1498.1" cy="758.6" r="9.4" fill="#a3a6a9" fill-opacity="0.88" stroke="#fbfbfb" stroke-width="1.4"/>
<circle cx="1515" cy="756" r="9.4" fill="#a3a6a9" fill-opacity="0.88" stroke="#fbfbfb" stroke-width="1.4"/>
<circle cx="1600.4" cy="694.8" r="9.4" fill="#fae28a" fill-opacity="0.88" stroke="#fbfbfb" stroke-width="1.4"/>
<circle cx="1618.2" cy="709.7" r="9.4" fill="#fae28a" fill-opacity="0.88" stroke="#fbfbfb" stroke-width="1.4"/>
<circle cx="1603.4" cy="723.7" r="9.4" fill="#fae28a" fill-opacity="0.88" stroke="#fbfbfb" stroke-width="1.4"/>
<circle cx="1634.5" cy="738.6" r="9.4" fill="#fae28a" fill-opacity="0.88" stroke="#fbfbfb" stroke-width="1.4"/>
<circle cx="1543.4" cy="770.1" r="9.4" fill="#fae28a" fill-opacity="0.88" stroke="#fbfbfb" stroke-width="1.4"/>
<circle cx="1567.8" cy="771.2" r="9.4" fill="#a3a6a9" fill-opacity="0.88" stroke="#fbfbfb" stroke-width="1.4"/>
<circle cx="1569.3" cy="764.5" r="9.4" fill="#a3a6a9" fill-opacity="0.88" stroke="#fbfbfb" stroke-width="1.4"/>
<circle cx="1578.2" cy="756.3" r="9.4" fill="#a3a6a9" fill-opacity="0.88" stroke="#fbfbfb" stroke-width="1.4"/>
<circle cx="1600.4" cy="756.3" r="9.4" fill="#fae28a" fill-opacity="0.88" stroke="#fbfbfb" stroke-width="1.4"/>
<circle cx="1587" cy="779.3" r="9.4" fill="#fae28a" fill-opacity="0.88" stroke="#fbfbfb" stroke-width="1.4"/>
<circle cx="1668.6" cy="775.1" r="9.6" fill="#a3a6a9" fill-opacity="0.88" stroke="#fbfbfb" stroke-width="1.4"/>
<circle cx="1523" cy="805.2" r="9.4" fill="#a3a6a9" fill-opacity="0.88" stroke="#fbfbfb" stroke-width="1.4"/>
<circle cx="1551.6" cy="814.8" r="9.4" fill="#fae28a" fill-opacity="0.88" stroke="#fbfbfb" stroke-width="1.4"/>
<circle cx="1584.4" cy="808.9" r="9.4" fill="#fae28a" fill-opacity="0.88" stroke="#fbfbfb" stroke-width="1.4"/>
<circle cx="1570.7" cy="832.3" r="9.4" fill="#a3a6a9" fill-opacity="0.88" stroke="#fbfbfb" stroke-width="1.4"/>
<circle cx="1587.4" cy="828.4" r="9.4" fill="#fae28a" fill-opacity="0.88" stroke="#fbfbfb" stroke-width="1.4"/>
<circle cx="1520.3" cy="841.9" r="9.4" fill="#a3a6a9" fill-opacity="0.88" stroke="#fbfbfb" stroke-width="1.4"/>
<circle cx="1542.2" cy="851.6" r="9.4" fill="#a3a6a9" fill-opacity="0.88" stroke="#fbfbfb" stroke-width="1.4"/>
<circle cx="1557" cy="866.7" r="9.4" fill="#fae28a" fill-opacity="0.88" stroke="#fbfbfb" stroke-width="1.4"/>
<circle cx="1628.1" cy="807.7" r="9.4" fill="#f8d97b" fill-opacity="0.88" stroke="#fbfbfb" stroke-width="1.4"/>
<circle cx="1634.1" cy="828.4" r="9.4" fill="#a3a6a9" fill-opacity="0.88" stroke="#fbfbfb" stroke-width="1.4"/>
<circle cx="1668.9" cy="840.7" r="9.4" fill="#f8d97b" fill-opacity="0.88" stroke="#fbfbfb" stroke-width="1.4"/>
<circle cx="1677" cy="837.8" r="9.4" fill="#f8d97b" fill-opacity="0.88" stroke="#fbfbfb" stroke-width="1.4"/>
<circle cx="1795.6" cy="459.7" r="12.9" fill="#a3a6a9" fill-opacity="0.88" stroke="#fbfbfb" stroke-width="1.4"/>
<circle cx="1853" cy="548.6" r="9.4" fill="#a3a6a9" fill-opacity="0.88" stroke="#fbfbfb" stroke-width="1.4"/>
<circle cx="1709.4" cy="540" r="13.2" fill="#fae28a" fill-opacity="0.88" stroke="#fbfbfb" stroke-width="1.4"/>
<circle cx="1760.1" cy="663" r="16.2" fill="#f8d97b" fill-opacity="0.88" stroke="#fbfbfb" stroke-width="1.4"/>
<circle cx="1779.5" cy="644" r="9.4" fill="#a3a6a9" fill-opacity="0.88" stroke="#fbfbfb" stroke-width="1.4"/>
<circle cx="1803.8" cy="646.2" r="9.4" fill="#a3a6a9" fill-opacity="0.88" stroke="#fbfbfb" stroke-width="1.4"/>
<circle cx="1805.2" cy="660.5" r="9.4" fill="#fae28a" fill-opacity="0.88" stroke="#fbfbfb" stroke-width="1.4"/>
<circle cx="1843.3" cy="610.3" r="20.2" fill="#fae28a" fill-opacity="0.88" stroke="#fbfbfb" stroke-width="1.4"/>
<circle cx="1825.5" cy="676.9" r="9.4" fill="#fae28a" fill-opacity="0.88" stroke="#fbfbfb" stroke-width="1.4"/>
<circle cx="1851.5" cy="680.6" r="9.4" fill="#a3a6a9" fill-opacity="0.88" stroke="#fbfbfb" stroke-width="1.4"/>
<circle cx="1896" cy="667.6" r="9.4" fill="#fae28a" fill-opacity="0.88" stroke="#fbfbfb" stroke-width="1.4"/>
<circle cx="1893.8" cy="669" r="9.4" fill="#a3a6a9" fill-opacity="0.88" stroke="#fbfbfb" stroke-width="1.4"/>
<circle cx="1767" cy="728.7" r="10" fill="#a3a6a9" fill-opacity="0.88" stroke="#fbfbfb" stroke-width="1.4"/>
<circle cx="1738.4" cy="749.2" r="10" fill="#a3a6a9" fill-opacity="0.88" stroke="#fbfbfb" stroke-width="1.4"/>
<circle cx="1861.8" cy="706" r="9.4" fill="#a3a6a9" fill-opacity="0.88" stroke="#fbfbfb" stroke-width="1.4"/>
<circle cx="1873.5" cy="711.2" r="9.4" fill="#a3a6a9" fill-opacity="0.88" stroke="#fbfbfb" stroke-width="1.4"/>
<circle cx="1844.7" cy="700.2" r="13.2" fill="#fae28a" fill-opacity="0.88" stroke="#fbfbfb" stroke-width="1.4"/>
<circle cx="1848.9" cy="739.1" r="13.6" fill="#f8d97b" fill-opacity="0.88" stroke="#fbfbfb" stroke-width="1.4"/>
<circle cx="1858.6" cy="758.5" r="13.3" fill="#f8d97b" fill-opacity="0.88" stroke="#fbfbfb" stroke-width="1.4"/>
<circle cx="1897.5" cy="739.7" r="9.5" fill="#f8d97b" fill-opacity="0.88" stroke="#fbfbfb" stroke-width="1.4"/>
<circle cx="1892.3" cy="760.5" r="9.5" fill="#fae28a" fill-opacity="0.88" stroke="#fbfbfb" stroke-width="1.4"/>
<rect x="981.5" y="217" width="37" height="36" rx="2" fill="#f1f2f3" fill-opacity="0.92"/>
<rect x="981.5" y="261" width="37" height="36" rx="2" fill="#f1f2f3" fill-opacity="0.92"/>
<path d="M992.5 235 H1008.8 M1000.6 227 V243" stroke="#7e8286" stroke-width="4.2"/>
<path d="M992.5 280 H1008.8" stroke="#7e8286" stroke-width="4"/>
<rect x="1595" y="1004" width="310" height="16" fill="#eeeff0" fill-opacity="0.85"/>
<text x="1596" y="1017" font-size="14.2" fill="#3f7cab" textLength="105" lengthAdjust="spacingAndGlyphs">© OpenMapTiles</text>
<text x="1713" y="1017" font-size="14.2" fill="#3f7cab" textLength="192" lengthAdjust="spacingAndGlyphs">© OpenStreetMap contributors</text>
</g>
</svg>
<div class="t" style="left:1252px;top:168px;font-size:19.55px;font-weight:700;color:#161513">New Cases Breakout - Assignment Map</div>

<!-- TABS -->
<div id="tabs">
  <div class="t" style="left:15px;top:15px;font-size:16.3px;font-weight:700;color:#161513">New Case Analysis</div>
  <div class="t" style="left:193px;top:15px;font-size:16.6px;color:#3a3632">Cases in Employee Locations</div>
  <div class="t" style="left:441px;top:15px;font-size:16.85px;color:#3a3632">Covid Analysis</div>
  <div class="abs" style="left:0;top:42px;width:178px;height:4px;background:#5f7d4f"></div>
  <svg class="abs" style="left:0;top:0" width="1920" height="46">
    <circle cx="588.3" cy="23.3" r="8.6" fill="none" stroke="#161513" stroke-width="1.6"/>
    <path d="M583.8 23.3 H592.8 M588.3 18.8 V27.8" stroke="#161513" stroke-width="1.8"/>
    <!-- brush -->
    <path d="M1761 17 H1774 V27 L1769.5 29.5 V34 H1765.5 V29.5 L1761 27 Z M1761 24.5 H1774" fill="none" stroke="#5e8a2a" stroke-width="1.5"/>
    <!-- bolt -->
    <path d="M1806 16.5 L1795 28 H1803 L1799 34.5 L1811 23.5 H1803 Z" fill="none" stroke="#5e8a2a" stroke-width="1.5" stroke-linejoin="miter"/>
    <line x1="1829.7" y1="11" x2="1829.7" y2="36" stroke="#d6d3d0" stroke-width="1"/>
    <!-- layout icons -->
    <rect x="1845.8" y="15.8" width="20" height="20" fill="none" stroke="#2b2825" stroke-width="1.6"/>
    <rect x="1845.8" y="15.8" width="7" height="20" fill="#2b2825"/>
    <rect x="1881.3" y="15.8" width="20" height="20" fill="none" stroke="#2b2825" stroke-width="1.6"/>
    <rect x="1887" y="19" width="4.5" height="13.5" fill="#2b2825"/>
  </svg>
</div>
</body></html>
